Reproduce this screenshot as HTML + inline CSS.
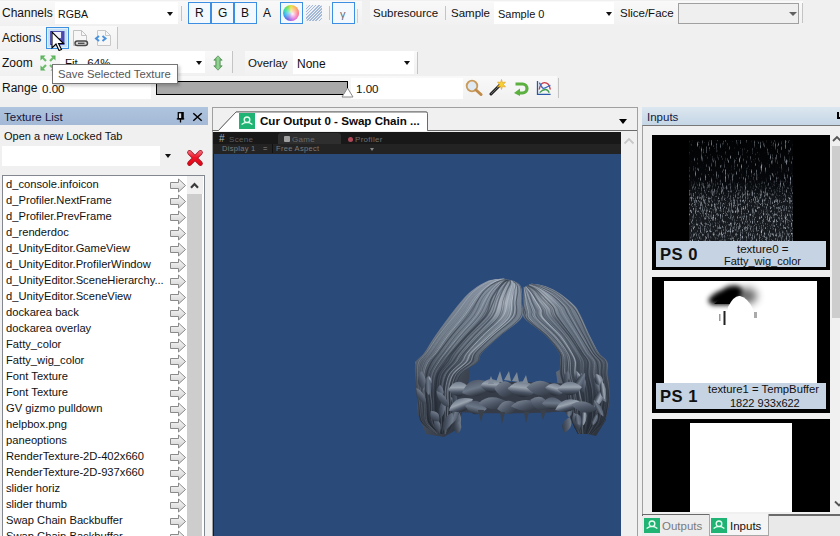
<!DOCTYPE html>
<html><head><meta charset="utf-8">
<style>
*{box-sizing:border-box;margin:0;padding:0}
html,body{width:840px;height:536px;overflow:hidden;background:#f0f0f0;font-family:"Liberation Sans",sans-serif;font-size:11.5px;color:#111}
.a{position:absolute}
.t{position:absolute;white-space:nowrap;line-height:14px}
.tb{position:absolute;background:linear-gradient(#f9f9f9,#f1f1f1)}
.sep{position:absolute;width:1px;background:#c4c4c4}
.combo{position:absolute;background:#fff}
.arr{position:absolute;width:0;height:0;border-left:3.5px solid transparent;border-right:3.5px solid transparent;border-top:4px solid #111}
.btn{position:absolute;border:1px solid #3c8ee2;background:#f4f9fd}
.row{position:absolute;left:6px;height:16px;line-height:16px;font-size:11.2px;white-space:nowrap}
.ra{position:absolute;left:170px}
</style></head><body>

<!-- ===== Row 1 ===== -->
<div class="tb" style="left:0;top:1px;width:362px;height:24px"></div>
<div class="tb" style="left:370px;top:1px;width:433px;height:24px"></div>
<div class="t" style="left:2px;top:6px;font-size:12px">Channels</div>
<div class="combo" style="left:55px;top:2px;width:123px;height:22px"></div>
<div class="t" style="left:58px;top:7px;font-size:10.6px">RGBA</div>
<div class="arr" style="left:167px;top:12px"></div>
<div class="sep" style="left:181px;top:6px;height:15px"></div>
<div class="btn" style="left:188px;top:2px;width:23px;height:22px"></div>
<div class="btn" style="left:211px;top:2px;width:23px;height:22px"></div>
<div class="btn" style="left:234px;top:2px;width:23px;height:22px"></div>
<div class="t" style="left:195px;top:6px;font-size:12px">R</div>
<div class="t" style="left:218px;top:6px;font-size:12px">G</div>
<div class="t" style="left:241px;top:6px;font-size:12px">B</div>
<div class="t" style="left:263px;top:6px;font-size:12px">A</div>
<div class="btn" style="left:280px;top:2px;width:23px;height:22px"></div>
<div class="a" style="left:283px;top:5px;width:16px;height:16px;border-radius:50%;background:conic-gradient(#e8e040,#ff9a40 45deg,#ff4060 95deg,#e040d0 150deg,#6050e0 205deg,#30b0f0 255deg,#40e0a0 300deg,#90e040 335deg,#e8e040)"><div class="a" style="left:0;top:0;width:16px;height:16px;border-radius:50%;background:radial-gradient(circle at 60% 55%,rgba(255,255,255,.95) 0,rgba(255,255,255,.55) 25%,rgba(255,255,255,0) 65%)"></div></div>
<div class="a" style="left:306px;top:5px;width:16px;height:16px;border-radius:2px;background:repeating-linear-gradient(135deg,#a3b9d6 0 1.1px,#eef2f8 1.1px 2.2px)"></div>
<div class="sep" style="left:329px;top:6px;height:14px"></div>
<div class="btn" style="left:332px;top:2px;width:23px;height:22px"></div>
<div class="t" style="left:340px;top:7px;font-size:11px;color:#666e7a">&#947;</div>
<div class="sep" style="left:357px;top:9px;height:14px;background:#cfcfcf"></div>
<div class="t" style="left:373px;top:6px">Subresource</div>
<div class="sep" style="left:445px;top:6px;height:14px"></div>
<div class="t" style="left:451px;top:6px">Sample</div>
<div class="combo" style="left:494px;top:2px;width:120px;height:22px"></div>
<div class="t" style="left:498px;top:7px;font-size:11px">Sample 0</div>
<div class="arr" style="left:606px;top:12px"></div>
<div class="t" style="left:620px;top:6px">Slice/Face</div>
<div class="a" style="left:678px;top:3px;width:121px;height:21px;border:1px solid #a0a0a0;background:#efefef"></div>
<div class="arr" style="left:789px;top:12px;border-top-color:#606060;border-left-width:4px;border-right-width:4px;border-top-width:4.5px"></div>
<div class="sep" style="left:802px;top:3px;height:20px"></div>

<!-- ===== Row 2 ===== -->
<div class="tb" style="left:0;top:26px;width:117px;height:24px"></div>
<div class="t" style="left:2px;top:31px;font-size:12px">Actions</div>
<div class="sep" style="left:117px;top:27px;height:22px"></div>
<div class="a" style="left:46px;top:27px;width:23px;height:22px;border:1px solid #3d8fe0;background:#cfe4f8"></div>
<div class="a" style="left:47px;top:28px;width:21px;height:20px;border:1.5px solid #e2f0fb;background:#c6e0f6"></div>
<svg class="a" style="left:49px;top:30px" width="17" height="16">
<defs><linearGradient id="fl" x1="0" y1="0" x2="1" y2="0"><stop offset="0" stop-color="#b8b8ee"/><stop offset=".5" stop-color="#8080d8"/><stop offset="1" stop-color="#3a3aa6"/></linearGradient></defs>
<rect x="1.5" y="1.5" width="13.5" height="13" fill="url(#fl)" stroke="#5050b0" stroke-width="1"/>
<rect x="4" y="2" width="8" height="6" fill="#f0f0fc"/>
</svg>
<svg class="a" style="left:51px;top:31px" width="15" height="22">
<path d="M1 1 L1 17 L5 13 L8 19.5 L10.5 18.5 L7.5 12.5 L12.5 12.5 Z" fill="#fff" stroke="#000" stroke-width="1.1" stroke-linejoin="miter"/>
</svg>
<svg class="a" style="left:72px;top:29px" width="18" height="19">
<path d="M1.5 1.5 H9.5 L14.5 6.5 V16.5 H1.5 Z" fill="#f7f7f7" stroke="#c2c2c2" stroke-width="1"/>
<path d="M9.5 1.5 V6.5 H14.5" fill="none" stroke="#c2c2c2"/>
<rect x="3" y="12" width="12.5" height="4.6" rx="2.3" fill="#d8d8d8" stroke="#4a4a4a" stroke-width="1.5"/>
<line x1="6" y1="14.3" x2="12.5" y2="14.3" stroke="#4a4a4a" stroke-width="1.3"/>
</svg>
<svg class="a" style="left:94px;top:29px" width="18" height="19">
<path d="M3.5 1.5 H11.5 L16.5 6.5 V16.5 H3.5 Z" fill="#f7f7f7" stroke="#c8c8c8" stroke-width="1"/>
<path d="M11.5 1.5 V6.5 H16.5" fill="none" stroke="#c8c8c8"/>
<path d="M5 7 L2 9.5 L5 12 M8.5 7 L11.5 9.5 L8.5 12" fill="none" stroke="#4a92dc" stroke-width="2"/>
</svg>


<!-- ===== Row 3 ===== -->
<div class="tb" style="left:0;top:51px;width:232px;height:24px"></div>
<div class="tb" style="left:245px;top:51px;width:172px;height:24px"></div>
<div class="t" style="left:2px;top:56px;font-size:12px">Zoom</div>
<div class="combo" style="left:60px;top:51px;width:145px;height:22px"></div>
<div class="t" style="left:65px;top:56px">Fit&nbsp;&nbsp; 64%</div>
<div class="arr" style="left:196px;top:61px"></div>
<div class="sep" style="left:232px;top:51px;height:22px"></div>
<svg class="a" style="left:39px;top:54px" width="18" height="18">
<g fill="#58b05a">
<path d="M1.5 1.5 H6.5 L1.5 6.5Z"/><path d="M16.5 1.5 H11.5 L16.5 6.5Z"/><path d="M1.5 16.5 H6.5 L1.5 11.5Z"/><path d="M16.5 16.5 H11.5 L16.5 11.5Z"/>
</g>
<g stroke="#6cbc6c" stroke-width="2.2">
<path d="M3 3 L7 7"/><path d="M15 3 L11 7"/><path d="M3 15 L7 11"/><path d="M15 15 L11 11"/>
</g>
</svg>
<svg class="a" style="left:210px;top:55px" width="16" height="16">
<defs><linearGradient id="ga" x1="0" y1="0" x2="1" y2="0"><stop offset="0" stop-color="#4a9a4e"/><stop offset=".5" stop-color="#9ad89a"/><stop offset="1" stop-color="#4a9a4e"/></linearGradient></defs>
<path d="M8 0.8 L12.2 5.2 H10.2 V10.8 H12.2 L8 15.2 L3.8 10.8 H5.8 V5.2 H3.8 Z" fill="url(#ga)" stroke="#4f8a52" stroke-width="0.7" stroke-linejoin="round"/>
</svg>

<div class="t" style="left:248px;top:56px">Overlay</div>
<div class="combo" style="left:293px;top:51px;width:121px;height:23px"></div>
<div class="t" style="left:297px;top:57px;font-size:12px">None</div>
<div class="arr" style="left:404px;top:61px"></div>
<div class="sep" style="left:417px;top:52px;height:22px"></div>

<!-- ===== Row 4 ===== -->
<div class="tb" style="left:0;top:76px;width:557px;height:24px"></div>
<div class="t" style="left:2px;top:81px;font-size:12px">Range</div>
<div class="combo" style="left:40px;top:80px;width:111px;height:19px"></div>
<div class="t" style="left:42px;top:82px;font-size:11.6px">0.00</div>
<div class="a" style="left:156px;top:81px;width:192px;height:14px;border:1.5px solid #000;background:#a9a9a9"></div>
<div class="combo" style="left:351px;top:78px;width:112px;height:21px"></div>
<div class="t" style="left:356px;top:82px;font-size:11.6px">1.00</div>
<div class="sep" style="left:558px;top:78px;height:20px"></div>
<div class="a" style="left:156px;top:81px;width:3px;height:3px;border-left:2px solid transparent;border-right:2px solid transparent;border-top:3px solid #000"></div>
<svg class="a" style="left:341px;top:87px" width="13" height="11"><path d="M6.5 1 L12 10 H1 Z" fill="#fff" stroke="#888" stroke-width="1"/></svg>
<svg class="a" style="left:465px;top:79px" width="18" height="17">
<circle cx="7" cy="7" r="5.3" fill="#dfe9f3" stroke="#c99a5a" stroke-width="1.8"/>
<path d="M11 11 L16 15.5" stroke="#c08a48" stroke-width="3" stroke-linecap="round"/>
</svg>
<svg class="a" style="left:489px;top:79px" width="18" height="17">
<path d="M2 15 L11 6" stroke="#222" stroke-width="3" stroke-linecap="round"/>
<path d="M2 15 L11 6" stroke="#666" stroke-width="1"/>
<path d="M12.5 0.5 L13.5 3.5 L16.5 3 L14.5 5.5 L16.5 8 L13.5 7.5 L12.5 10.5 L11.5 7.5 L8.5 8 L10.5 5.5 L8.5 3 L11.5 3.5Z" fill="#f5d030" stroke="#e0a020" stroke-width=".6"/>
</svg>
<svg class="a" style="left:513px;top:81px" width="16" height="15">
<path d="M2.5 3 H9.5 A4.5 4.5 0 0 1 9.5 12 H6" fill="none" stroke="#5cb040" stroke-width="3.2"/>
<path d="M1 12 L7 7.5 V15Z" fill="#5cb040"/>
</svg>
<svg class="a" style="left:536px;top:80px" width="17" height="16">
<path d="M3.2 9.5 C4 4.5 6 2.6 8.5 2.6 C11 2.6 13.5 4.5 14.3 9.5" fill="none" stroke="#c83a48" stroke-width="1.4"/>
<path d="M3.6 12.6 C6 10.2 8 9.5 9.5 9.5 C11 9.5 12.5 11 13.2 12.8" fill="none" stroke="#3e9e4a" stroke-width="1.3"/>
<path d="M3.4 2.6 C5 6 6 8.3 7.5 8.3 C10 8.3 12 6 14.4 5.4" fill="none" stroke="#3a68c0" stroke-width="1.3"/>
<path d="M1.5 1 V14.4 H14.6" fill="none" stroke="#2a58a8" stroke-width="1.3"/>
</svg>



<!-- ===== Texture List panel ===== -->
<div class="a" style="left:0;top:107px;width:208px;height:18px;background:linear-gradient(#afc4de,#a3b9d6)"></div>
<div class="t" style="left:4px;top:110px;color:#14163a">Texture List</div>
<div class="combo" style="left:2px;top:146px;width:158px;height:20px"></div>
<div class="a" style="left:160px;top:146px;width:16px;height:20px;background:#f0f0f0"></div>
<div class="arr" style="left:165px;top:154px"></div>
<div class="t" style="left:4px;top:129px;font-size:11px">Open a new Locked Tab</div>
<svg class="a" style="left:176px;top:111px" width="10" height="12"><rect x="2.3" y="1.7" width="4.5" height="6" fill="#d4dbe4" stroke="#000" stroke-width="1.3"/><rect x="5.2" y="1" width="2.4" height="7" fill="#000"/><path d="M0.8 7.9 H8.2 M4.5 8 V11.5" stroke="#000" stroke-width="1.3"/></svg>
<svg class="a" style="left:192px;top:112px" width="11" height="10"><path d="M1.3 1.3 L9.7 8.7 M9.7 1.3 L1.3 8.7" stroke="#000" stroke-width="1.5"/></svg>
<svg class="a" style="left:186px;top:149px" width="18" height="18">
<defs><linearGradient id="rx" x1="0" y1="0" x2="0" y2="18" gradientUnits="userSpaceOnUse"><stop offset="0" stop-color="#f28a98"/><stop offset=".45" stop-color="#f01828"/><stop offset="1" stop-color="#d80010"/></linearGradient></defs>
<path d="M3.5 3.5 L14.5 14.5 M14.5 3.5 L3.5 14.5" stroke="#a01020" stroke-width="4.6" stroke-linecap="round"/>
<path d="M3.5 3.5 L14.5 14.5 M14.5 3.5 L3.5 14.5" stroke="url(#rx)" stroke-width="3.2" stroke-linecap="round"/>
</svg>

<div class="a" style="left:2px;top:175px;width:203px;height:370px;border:1px solid #828790;background:#fff"></div>
<div class="a" style="left:187px;top:176px;width:16px;height:18px;background:#f0f0f0"></div>
<div class="a" style="left:187px;top:194px;width:15px;height:350px;background:#cdcdcd"></div>
<svg width="0" height="0" style="position:absolute"><defs>
<linearGradient id="ag" x1="0" y1="0" x2="0" y2="1"><stop offset="0" stop-color="#fafafa"/><stop offset="1" stop-color="#cfcfcf"/></linearGradient>
<g id="ar"><path d="M1.5 4.5 H9.5 V1 L16.5 7.5 L9.5 14 V10.5 H1.5 Z" fill="url(#ag)" stroke="#8a8a8a" stroke-width="1" stroke-linejoin="miter"/></g>
</defs></svg>
<!-- list rows -->
<div class="row" style="top:176px">d_console.infoicon</div>
<svg class="a" style="left:169px;top:178px" width="18" height="15"><use href="#ar"/></svg>
<div class="row" style="top:192px">d_Profiler.NextFrame</div>
<svg class="a" style="left:169px;top:194px" width="18" height="15"><use href="#ar"/></svg>
<div class="row" style="top:208px">d_Profiler.PrevFrame</div>
<svg class="a" style="left:169px;top:210px" width="18" height="15"><use href="#ar"/></svg>
<div class="row" style="top:224px">d_renderdoc</div>
<svg class="a" style="left:169px;top:226px" width="18" height="15"><use href="#ar"/></svg>
<div class="row" style="top:240px">d_UnityEditor.GameView</div>
<svg class="a" style="left:169px;top:242px" width="18" height="15"><use href="#ar"/></svg>
<div class="row" style="top:256px">d_UnityEditor.ProfilerWindow</div>
<svg class="a" style="left:169px;top:258px" width="18" height="15"><use href="#ar"/></svg>
<div class="row" style="top:272px">d_UnityEditor.SceneHierarchy...</div>
<svg class="a" style="left:169px;top:274px" width="18" height="15"><use href="#ar"/></svg>
<div class="row" style="top:288px">d_UnityEditor.SceneView</div>
<svg class="a" style="left:169px;top:290px" width="18" height="15"><use href="#ar"/></svg>
<div class="row" style="top:304px">dockarea back</div>
<svg class="a" style="left:169px;top:306px" width="18" height="15"><use href="#ar"/></svg>
<div class="row" style="top:320px">dockarea overlay</div>
<svg class="a" style="left:169px;top:322px" width="18" height="15"><use href="#ar"/></svg>
<div class="row" style="top:336px">Fatty_color</div>
<svg class="a" style="left:169px;top:338px" width="18" height="15"><use href="#ar"/></svg>
<div class="row" style="top:352px">Fatty_wig_color</div>
<svg class="a" style="left:169px;top:354px" width="18" height="15"><use href="#ar"/></svg>
<div class="row" style="top:368px">Font Texture</div>
<svg class="a" style="left:169px;top:370px" width="18" height="15"><use href="#ar"/></svg>
<div class="row" style="top:384px">Font Texture</div>
<svg class="a" style="left:169px;top:386px" width="18" height="15"><use href="#ar"/></svg>
<div class="row" style="top:400px">GV gizmo pulldown</div>
<svg class="a" style="left:169px;top:402px" width="18" height="15"><use href="#ar"/></svg>
<div class="row" style="top:416px">helpbox.png</div>
<svg class="a" style="left:169px;top:418px" width="18" height="15"><use href="#ar"/></svg>
<div class="row" style="top:432px">paneoptions</div>
<svg class="a" style="left:169px;top:434px" width="18" height="15"><use href="#ar"/></svg>
<div class="row" style="top:448px">RenderTexture-2D-402x660</div>
<svg class="a" style="left:169px;top:450px" width="18" height="15"><use href="#ar"/></svg>
<div class="row" style="top:464px">RenderTexture-2D-937x660</div>
<svg class="a" style="left:169px;top:466px" width="18" height="15"><use href="#ar"/></svg>
<div class="row" style="top:480px">slider horiz</div>
<svg class="a" style="left:169px;top:482px" width="18" height="15"><use href="#ar"/></svg>
<div class="row" style="top:496px">slider thumb</div>
<svg class="a" style="left:169px;top:498px" width="18" height="15"><use href="#ar"/></svg>
<div class="row" style="top:512px">Swap Chain Backbuffer</div>
<svg class="a" style="left:169px;top:514px" width="18" height="15"><use href="#ar"/></svg>
<div class="row" style="top:528px">Swap Chain Backbuffer</div>
<svg class="a" style="left:169px;top:530px" width="18" height="15"><use href="#ar"/></svg>


<svg class="a" style="left:188px;top:180px" width="12" height="10"><path d="M3 7.8 L6.5 4 L10 7.8" fill="none" stroke="#3a3a3a" stroke-width="2.2"/></svg>
<!-- ===== Center panel ===== -->
<div class="a" style="left:212px;top:107px;width:426px;height:440px;border:1px solid #a0a0a0;background:#f0f0f0"></div>
<div class="a" style="left:213px;top:132px;width:408px;height:12px;background:#181818"></div>
<div class="a" style="left:213px;top:144px;width:408px;height:10px;background:#232323"></div>
<div class="a" style="left:213px;top:154px;width:408px;height:382px;background:#2a4a7a;border-left:1px solid #1a1a1a"></div>

<!-- tab -->
<svg class="a" style="left:212px;top:107px" width="426" height="26">
<path d="M0.5 23.5 H6.5 L24 5 H214 Q215.5 5 215.5 6.5 V23.5 H425" fill="none" stroke="#7a7a7a" stroke-width="1"/>
<path d="M6.5 23.5 L24 5 H214 Q215.5 5 215.5 6.5 V24 H6.5Z" fill="#fff"/>
<path d="M0.5 23.5 H6.5 L24 5 H214 Q215.5 5 215.5 6.5 V23.5 H425" fill="none" stroke="#6a6a6a" stroke-width="1"/>
</svg>
<div class="a" style="left:239px;top:113px;width:16px;height:16px;background:#1fb473"></div>
<svg class="a" style="left:239px;top:113px" width="16" height="16"><circle cx="8" cy="6.8" r="2.8" fill="none" stroke="#e8fff2" stroke-width="1.4"/><path d="M2.6 11.6 Q8 7.2 13.4 11.6" fill="none" stroke="#e8fff2" stroke-width="1.3"/></svg>
<div class="t" style="left:260px;top:114px;font-weight:bold;font-size:11.6px;color:#0a0a0a">Cur Output 0 - Swap Chain ...</div>
<div class="a" style="left:619px;top:119px;width:0;height:0;border-left:4px solid transparent;border-right:4px solid transparent;border-top:5px solid #000"></div>
<svg class="a" style="left:623px;top:136px" width="12" height="10"><path d="M1.5 7.5 L6 3 L10.5 7.5" fill="none" stroke="#c8c8c8" stroke-width="1.8"/></svg>


<!-- hair -->
<svg class="a" style="left:0;top:0" width="840" height="536">
<defs>
<linearGradient id="dk" x1="0" y1="0" x2="0" y2="1"><stop offset="0" stop-color="#1e242d" stop-opacity="0"/><stop offset=".45" stop-color="#1e242d" stop-opacity="0"/><stop offset="1" stop-color="#1e242d" stop-opacity=".55"/></linearGradient>
<linearGradient id="hl" x1="0" y1="0" x2="0" y2="1"><stop offset="0" stop-color="#8893a2"/><stop offset=".4" stop-color="#67727f"/><stop offset=".72" stop-color="#404856"/><stop offset="1" stop-color="#2c333d"/></linearGradient>
<linearGradient id="hr" x1="0" y1="0" x2="0" y2="1"><stop offset="0" stop-color="#7f8a99"/><stop offset=".4" stop-color="#606b79"/><stop offset=".72" stop-color="#3e4654"/><stop offset="1" stop-color="#2c333d"/></linearGradient>
<radialGradient id="hg"><stop offset="0" stop-color="#e6ecf2" stop-opacity=".5"/><stop offset="1" stop-color="#dfe6ee" stop-opacity="0"/></radialGradient>
<linearGradient id="cy" x1="0" y1="0" x2="0" y2="1"><stop offset="0" stop-color="#5a6473"/><stop offset=".35" stop-color="#a6b0bd"/><stop offset=".6" stop-color="#5d6776"/><stop offset="1" stop-color="#2c333d"/></linearGradient>
<linearGradient id="lf1" x1="0" y1="0" x2="0" y2="1"><stop offset="0" stop-color="#6f7a8a"/><stop offset=".4" stop-color="#9aa4b0"/><stop offset=".7" stop-color="#4a5464"/><stop offset="1" stop-color="#262c35"/></linearGradient>
<linearGradient id="lf2" x1="0" y1="0" x2="1" y2="1"><stop offset="0" stop-color="#8893a1"/><stop offset=".5" stop-color="#4e5868"/><stop offset="1" stop-color="#262c35"/></linearGradient>
<linearGradient id="lf3" x1="0" y1="0" x2="0" y2="1"><stop offset="0" stop-color="#505a6a"/><stop offset=".5" stop-color="#6c7787"/><stop offset="1" stop-color="#2a313b"/></linearGradient>
<linearGradient id="cl" x1="0" y1="0" x2="1" y2="1"><stop offset="0" stop-color="#6a7482"/><stop offset=".5" stop-color="#444c59"/><stop offset="1" stop-color="#262c35"/></linearGradient>
<clipPath id="Lc"><path d="M503.0 278.4 C500.6 278.8 493.4 278.8 488.6 280.6 C483.8 282.4 478.1 286.1 474.0 289.0 C469.9 291.9 467.8 293.8 464.0 298.0 C460.2 302.2 455.8 307.7 451.0 314.0 C446.2 320.3 439.5 329.5 435.0 336.0 C430.5 342.5 427.2 348.7 424.0 353.0 C420.8 357.3 417.5 358.5 416.0 362.0 C414.5 365.5 415.0 369.3 415.0 374.0 C415.0 378.7 415.5 384.8 416.0 390.0 C416.5 395.2 417.2 399.7 418.0 405.0 C418.8 410.3 417.8 417.2 421.0 422.0 C424.2 426.8 434.3 432.0 437.0 434.0 L447.0 434.0 C448.0 432.0 451.7 426.8 453.0 422.0 C454.3 417.2 454.5 410.3 455.0 405.0 C455.5 399.7 454.8 395.2 456.0 390.0 C457.2 384.8 458.3 378.7 462.0 374.0 C465.7 369.3 474.7 365.5 478.0 362.0 C481.3 358.5 478.3 357.3 482.0 353.0 C485.7 348.7 493.4 341.8 500.0 336.0 C506.6 330.2 517.8 323.7 521.5 318.0 C525.2 312.3 521.9 306.3 522.0 302.0 C522.1 297.7 522.3 294.8 522.0 292.0 C521.7 289.2 521.3 286.8 520.0 285.0 C518.7 283.2 515.0 281.7 514.0 281.0 Z"/></clipPath>
<clipPath id="Rc"><path d="M531.4 283.4 C533.8 283.9 540.9 284.6 545.7 286.3 C550.5 288.0 555.3 290.3 560.0 293.4 C564.7 296.5 570.7 301.6 574.0 305.0 C577.3 308.4 577.3 308.8 580.0 314.0 C582.7 319.2 586.8 329.5 590.0 336.0 C593.2 342.5 596.1 348.7 599.0 353.0 C601.9 357.3 606.0 358.5 607.5 362.0 C609.0 365.5 607.6 369.3 608.0 374.0 C608.4 378.7 609.8 384.8 610.0 390.0 C610.2 395.2 610.0 399.7 609.0 405.0 C608.0 410.3 606.8 417.2 604.0 422.0 C601.2 426.8 594.0 432.0 592.0 434.0 L578.0 434.0 C577.0 432.0 573.7 426.8 572.0 422.0 C570.3 417.2 569.2 410.3 568.0 405.0 C566.8 399.7 566.3 395.2 565.0 390.0 C563.7 384.8 560.8 378.7 560.0 374.0 C559.2 369.3 560.2 365.5 560.0 362.0 C559.8 358.5 561.3 357.3 559.0 353.0 C556.7 348.7 551.7 341.7 546.0 336.0 C540.3 330.3 528.7 323.0 525.0 319.0 C521.3 315.0 524.3 314.3 524.0 312.0 C523.7 309.7 523.2 307.8 523.0 305.0 C522.8 302.2 523.0 297.9 523.0 295.0 C523.0 292.1 522.9 288.9 522.9 287.7 Z"/></clipPath>
</defs>
<path d="M415 362 L432 348 L470 370 L466 402 L456 430 L444 437 L426 434 L418 414 Z" fill="url(#cl)"/>
<path d="M608 362 L594 349 L556 372 L560 402 L578 432 L596 436 L606 420 Z" fill="url(#cl)"/>
<path d="M503.0 278.4 C500.6 278.8 493.4 278.8 488.6 280.6 C483.8 282.4 478.1 286.1 474.0 289.0 C469.9 291.9 467.8 293.8 464.0 298.0 C460.2 302.2 455.8 307.7 451.0 314.0 C446.2 320.3 439.5 329.5 435.0 336.0 C430.5 342.5 427.2 348.7 424.0 353.0 C420.8 357.3 417.5 358.5 416.0 362.0 C414.5 365.5 415.0 369.3 415.0 374.0 C415.0 378.7 415.5 384.8 416.0 390.0 C416.5 395.2 417.2 399.7 418.0 405.0 C418.8 410.3 417.8 417.2 421.0 422.0 C424.2 426.8 434.3 432.0 437.0 434.0 L447.0 434.0 C448.0 432.0 451.7 426.8 453.0 422.0 C454.3 417.2 454.5 410.3 455.0 405.0 C455.5 399.7 454.8 395.2 456.0 390.0 C457.2 384.8 458.3 378.7 462.0 374.0 C465.7 369.3 474.7 365.5 478.0 362.0 C481.3 358.5 478.3 357.3 482.0 353.0 C485.7 348.7 493.4 341.8 500.0 336.0 C506.6 330.2 517.8 323.7 521.5 318.0 C525.2 312.3 521.9 306.3 522.0 302.0 C522.1 297.7 522.3 294.8 522.0 292.0 C521.7 289.2 521.3 286.8 520.0 285.0 C518.7 283.2 515.0 281.7 514.0 281.0 Z" fill="url(#hl)"/>
<g clip-path="url(#Lc)" fill="none">
<ellipse cx="503" cy="303" rx="12" ry="24" transform="rotate(25 503 303)" fill="url(#hg)"/>
<path d="M503.5 278.8 C501.2 279.2 494.4 279.3 489.7 281.0 C485.0 282.6 479.4 285.5 475.3 288.5 C471.2 291.4 468.8 294.3 464.9 298.6 C461.1 302.9 457.3 308.3 452.4 314.5 C447.5 320.8 440.2 329.5 435.6 336.0 C431.0 342.4 427.8 348.8 424.7 353.1 C421.6 357.3 418.7 358.0 417.1 361.4 C415.6 364.9 415.4 368.9 415.5 373.7 C415.5 378.6 416.7 385.0 417.2 390.3 C417.6 395.6 417.6 400.1 418.2 405.4 C418.9 410.7 418.0 417.5 421.1 422.1 C424.2 426.8 434.1 431.5 436.7 433.4" stroke="#95a0ae" stroke-width="0.61" opacity="0.25"/>
<path d="M504.0 278.3 C501.8 278.7 495.4 279.1 490.8 280.9 C486.3 282.6 480.6 285.9 476.8 288.8 C472.9 291.7 471.2 294.1 467.6 298.4 C464.0 302.8 460.2 308.5 455.3 314.7 C450.4 320.9 443.0 329.5 438.2 335.8 C433.4 342.1 429.9 348.3 426.7 352.6 C423.4 356.9 420.3 358.3 418.8 361.8 C417.3 365.2 417.7 368.7 417.6 373.4 C417.6 378.1 418.0 384.5 418.3 389.8 C418.7 395.1 419.0 400.1 419.7 405.4 C420.5 410.7 419.7 417.0 422.7 421.8 C425.6 426.6 435.0 432.2 437.5 434.2" stroke="#c8d2de" stroke-width="0.52" opacity="0.59"/>
<path d="M504.2 278.0 C502.1 278.5 495.7 279.0 491.3 280.8 C486.9 282.5 481.6 285.8 477.7 288.6 C473.8 291.5 471.3 293.7 467.8 297.9 C464.4 302.1 461.5 307.5 456.9 313.9 C452.3 320.4 444.9 330.0 440.2 336.5 C435.6 343.0 432.2 348.6 428.9 352.8 C425.6 357.1 422.2 358.6 420.5 362.0 C418.8 365.5 419.1 368.8 418.9 373.5 C418.7 378.3 418.9 385.2 419.3 390.4 C419.7 395.5 420.5 399.3 421.2 404.4 C422.0 409.6 421.2 416.6 423.9 421.5 C426.7 426.5 435.3 432.0 437.6 434.1" stroke="#95a0ae" stroke-width="0.96" opacity="0.28"/>
<path d="M503.9 278.4 C501.8 278.8 495.6 278.7 491.3 280.5 C487.0 282.4 481.8 286.6 478.3 289.5 C474.8 292.4 473.8 293.7 470.3 298.0 C466.8 302.2 462.2 308.7 457.4 315.0 C452.6 321.3 446.1 329.5 441.4 335.9 C436.8 342.2 432.5 348.8 429.4 353.1 C426.2 357.5 424.1 358.6 422.5 361.9 C420.8 365.3 419.9 368.9 419.5 373.5 C419.2 378.0 420.1 384.1 420.4 389.4 C420.8 394.8 421.1 399.9 421.6 405.4 C422.2 410.9 420.9 417.5 423.7 422.3 C426.5 427.1 436.1 432.2 438.5 434.2" stroke="#95a0ae" stroke-width="0.72" opacity="0.23"/>
<path d="M504.7 278.5 C502.6 279.0 496.3 279.8 492.2 281.7 C488.1 283.6 483.6 287.1 480.0 289.9 C476.4 292.7 474.1 294.4 470.7 298.5 C467.3 302.5 464.2 308.2 459.5 314.4 C454.8 320.7 447.2 329.5 442.3 335.9 C437.5 342.3 433.4 348.4 430.3 352.9 C427.3 357.3 425.4 359.0 423.8 362.6 C422.2 366.1 421.2 369.5 420.6 374.0 C420.1 378.5 420.2 384.3 420.5 389.5 C420.7 394.7 421.3 400.0 422.0 405.3 C422.8 410.7 422.4 417.0 425.2 421.8 C427.9 426.7 436.3 432.2 438.5 434.3" stroke="#95a0ae" stroke-width="0.88" opacity="0.37"/>
<path d="M504.9 278.5 C503.0 279.0 497.2 279.8 493.3 281.6 C489.4 283.4 484.8 286.3 481.4 289.2 C478.1 292.1 476.5 294.6 473.2 298.8 C469.9 302.9 466.4 307.9 461.6 314.0 C456.9 320.2 449.6 329.2 444.8 335.7 C440.0 342.2 436.1 348.5 432.9 353.0 C429.7 357.4 427.4 358.7 425.6 362.2 C423.9 365.7 423.0 369.1 422.4 373.8 C421.8 378.5 421.9 385.1 422.2 390.3 C422.4 395.5 423.3 399.5 423.9 404.8 C424.6 410.2 423.7 417.5 426.2 422.4 C428.7 427.4 436.6 432.6 438.7 434.6" stroke="#95a0ae" stroke-width="0.76" opacity="0.33"/>
<path d="M505.3 279.4 C503.4 279.7 497.8 279.9 494.0 281.6 C490.2 283.3 485.9 286.9 482.5 289.8 C479.1 292.7 476.8 294.8 473.6 299.0 C470.4 303.2 467.8 308.7 463.3 314.9 C458.7 321.1 450.9 329.8 446.1 336.1 C441.3 342.5 437.5 349.0 434.3 353.2 C431.1 357.4 428.9 358.0 427.0 361.4 C425.0 364.9 423.3 369.2 422.7 373.9 C422.1 378.6 422.8 384.5 423.1 389.7 C423.4 394.9 424.1 399.8 424.6 405.2 C425.1 410.5 423.7 417.2 426.0 422.0 C428.3 426.7 436.3 431.5 438.4 433.5" stroke="#c8d2de" stroke-width="0.63" opacity="0.36"/>
<path d="M504.7 278.9 C503.0 279.3 498.3 279.9 494.8 281.6 C491.3 283.4 486.9 286.5 483.8 289.3 C480.7 292.1 479.3 294.0 476.1 298.2 C473.0 302.4 469.8 308.3 465.1 314.5 C460.4 320.8 452.8 329.2 448.0 335.5 C443.1 341.9 439.4 348.4 436.1 352.8 C432.7 357.3 429.9 358.6 427.9 362.1 C425.9 365.7 424.6 369.4 424.0 374.1 C423.3 378.7 423.5 384.9 423.8 390.1 C424.2 395.3 425.4 400.0 426.0 405.4 C426.6 410.8 425.1 417.6 427.3 422.4 C429.5 427.1 437.2 431.9 439.2 433.8" stroke="#c8d2de" stroke-width="0.89" opacity="0.46"/>
<path d="M506.3 279.2 C504.6 279.7 499.7 280.5 496.2 282.2 C492.7 283.8 488.2 286.4 485.3 289.3 C482.3 292.1 481.3 294.8 478.4 299.1 C475.5 303.4 472.5 309.0 468.0 315.1 C463.5 321.3 456.5 329.6 451.5 335.9 C446.6 342.1 441.7 348.2 438.2 352.7 C434.8 357.1 433.0 358.9 431.1 362.6 C429.1 366.2 427.3 370.0 426.5 374.6 C425.7 379.1 426.3 384.9 426.4 390.1 C426.4 395.3 426.4 400.3 426.9 405.6 C427.3 410.9 426.8 417.1 428.9 421.9 C431.0 426.7 437.5 432.5 439.3 434.6" stroke="#222a35" stroke-width="1.03" opacity="0.34"/>
<path d="M505.9 279.0 C504.3 279.5 499.6 280.4 496.4 282.1 C493.1 283.8 489.5 286.4 486.6 289.2 C483.7 292.0 481.7 294.4 478.8 298.7 C476.0 303.1 474.1 309.2 469.5 315.4 C464.9 321.5 456.4 329.3 451.3 335.7 C446.1 342.1 441.6 349.2 438.4 353.6 C435.1 358.0 433.5 358.7 431.6 362.1 C429.6 365.6 427.8 369.5 426.9 374.2 C426.1 378.9 426.3 385.1 426.3 390.3 C426.3 395.5 426.5 400.0 427.0 405.3 C427.4 410.6 426.9 417.3 428.9 422.0 C431.0 426.8 437.6 431.8 439.4 433.8" stroke="#222a35" stroke-width="0.92" opacity="0.39"/>
<path d="M506.4 278.6 C504.9 279.2 500.6 279.9 497.6 281.9 C494.7 283.8 491.5 287.6 488.8 290.4 C486.1 293.2 484.1 294.5 481.3 298.6 C478.6 302.7 476.8 308.8 472.3 315.1 C467.8 321.4 459.6 329.9 454.4 336.2 C449.3 342.6 444.7 348.7 441.4 353.0 C438.2 357.2 437.0 358.3 434.9 361.9 C432.8 365.4 430.1 369.8 428.9 374.4 C427.6 379.1 427.4 384.7 427.5 389.8 C427.6 394.8 428.8 399.1 429.4 404.5 C430.0 409.9 429.2 417.4 430.9 422.2 C432.7 427.1 438.4 431.8 439.9 433.7" stroke="#95a0ae" stroke-width="0.57" opacity="0.43"/>
<path d="M506.6 279.2 C505.2 279.6 501.3 279.7 498.4 281.6 C495.6 283.4 492.2 287.4 489.4 290.3 C486.7 293.2 484.6 294.7 482.0 299.0 C479.4 303.2 478.2 309.5 473.9 315.6 C469.5 321.7 461.1 329.1 455.9 335.4 C450.7 341.8 446.0 349.1 442.8 353.6 C439.5 358.0 438.6 358.8 436.4 362.2 C434.2 365.7 430.8 369.8 429.4 374.4 C428.1 379.1 428.3 385.0 428.4 390.2 C428.6 395.3 430.0 400.0 430.3 405.3 C430.7 410.5 429.0 417.0 430.8 421.8 C432.5 426.5 439.0 431.6 440.7 433.6" stroke="#222a35" stroke-width="0.75" opacity="0.37"/>
<path d="M506.3 278.8 C505.2 279.3 502.1 279.7 499.5 281.6 C496.8 283.5 492.8 287.1 490.3 290.1 C487.8 293.2 487.1 295.7 484.6 299.9 C482.1 304.1 479.8 309.3 475.2 315.3 C470.7 321.4 462.7 329.8 457.5 336.1 C452.4 342.5 447.6 349.3 444.3 353.5 C441.0 357.8 439.7 358.1 437.6 361.5 C435.5 364.8 432.9 368.8 431.7 373.6 C430.5 378.3 430.2 384.8 430.2 390.0 C430.1 395.3 431.1 399.8 431.4 405.1 C431.8 410.4 430.8 416.9 432.4 421.7 C433.9 426.5 439.2 431.7 440.6 433.7" stroke="#95a0ae" stroke-width="0.57" opacity="0.33"/>
<path d="M506.9 279.6 C505.7 280.1 502.3 280.8 499.8 282.5 C497.3 284.1 494.2 286.9 491.9 289.6 C489.5 292.4 488.1 294.7 485.6 299.0 C483.0 303.3 481.0 309.3 476.5 315.6 C472.0 321.8 463.8 330.3 458.6 336.5 C453.5 342.7 448.6 348.6 445.4 352.8 C442.1 357.0 441.3 358.0 439.2 361.4 C437.1 364.9 434.1 368.6 432.6 373.5 C431.1 378.3 430.4 385.3 430.3 390.5 C430.2 395.7 431.5 399.3 431.9 404.7 C432.2 410.0 430.8 417.6 432.3 422.6 C433.8 427.5 439.5 432.4 440.9 434.4" stroke="#c8d2de" stroke-width="0.75" opacity="0.47"/>
<path d="M507.2 279.6 C506.1 280.0 503.3 280.4 500.9 282.2 C498.4 284.0 494.9 287.6 492.6 290.6 C490.3 293.5 489.5 295.7 487.2 300.0 C484.9 304.2 483.3 310.0 478.9 316.0 C474.5 322.0 466.1 329.9 460.8 336.1 C455.5 342.3 450.5 349.1 447.1 353.3 C443.7 357.5 442.8 358.1 440.5 361.5 C438.1 364.9 434.6 368.8 433.1 373.6 C431.5 378.5 431.4 385.2 431.3 390.5 C431.2 395.7 432.3 400.1 432.6 405.3 C432.9 410.6 431.6 417.2 433.1 422.0 C434.6 426.8 440.0 432.1 441.4 434.1" stroke="#222a35" stroke-width="0.69" opacity="0.39"/>
<path d="M507.2 279.3 C506.3 279.9 504.0 281.1 501.7 282.9 C499.5 284.7 496.1 287.2 493.9 290.0 C491.6 292.7 490.4 295.0 488.2 299.3 C486.0 303.5 484.8 309.3 480.5 315.4 C476.2 321.4 467.7 329.2 462.4 335.4 C457.2 341.7 452.3 348.4 449.0 352.8 C445.7 357.3 445.0 358.7 442.7 362.2 C440.4 365.7 436.6 369.4 435.1 374.0 C433.5 378.5 433.6 384.4 433.4 389.5 C433.2 394.7 433.6 399.3 433.8 404.7 C434.0 410.2 433.6 417.5 434.7 422.3 C435.9 427.1 439.8 431.7 440.8 433.6" stroke="#c8d2de" stroke-width="0.55" opacity="0.33"/>
<path d="M508.6 279.4 C507.6 279.9 504.9 280.7 502.7 282.6 C500.5 284.4 497.6 287.8 495.6 290.6 C493.6 293.5 492.8 295.2 490.7 299.4 C488.6 303.7 487.1 309.9 482.8 316.0 C478.6 322.2 470.6 329.9 465.2 336.2 C459.8 342.4 453.9 349.4 450.4 353.6 C446.8 357.8 445.9 358.1 443.7 361.5 C441.4 364.9 438.4 369.1 436.8 373.9 C435.1 378.7 433.9 384.9 433.7 390.1 C433.5 395.2 435.2 399.8 435.5 405.0 C435.7 410.3 434.5 416.6 435.4 421.5 C436.3 426.4 440.1 432.3 441.0 434.5" stroke="#222a35" stroke-width="0.65" opacity="0.53"/>
<path d="M507.7 279.5 C507.0 280.0 504.9 280.6 503.1 282.4 C501.3 284.2 498.9 287.4 496.9 290.2 C495.0 293.0 493.2 295.1 491.3 299.4 C489.4 303.6 489.6 309.4 485.4 315.5 C481.2 321.6 471.8 329.7 466.2 335.9 C460.6 342.0 455.3 348.2 451.9 352.5 C448.4 356.8 447.9 357.9 445.5 361.5 C443.2 365.2 439.3 369.7 437.6 374.5 C435.9 379.3 435.7 385.4 435.3 390.4 C435.0 395.4 435.2 399.2 435.4 404.4 C435.6 409.7 435.3 417.1 436.4 422.0 C437.5 426.9 441.0 431.9 441.9 433.9" stroke="#222a35" stroke-width="1.42" opacity="0.47"/>
<path d="M508.5 280.1 C507.8 280.5 506.0 280.7 504.3 282.4 C502.5 284.0 500.0 287.0 498.2 290.0 C496.5 293.0 495.8 296.2 493.9 300.4 C491.9 304.7 491.1 309.7 486.7 315.6 C482.3 321.5 473.2 329.5 467.6 335.7 C462.0 341.9 456.4 348.6 453.0 352.9 C449.7 357.2 450.1 358.1 447.7 361.7 C445.2 365.2 440.4 369.6 438.4 374.2 C436.4 378.9 436.1 384.5 435.8 389.6 C435.5 394.7 436.4 399.5 436.6 404.8 C436.8 410.2 435.9 417.0 436.8 421.9 C437.7 426.8 441.0 432.2 441.9 434.3" stroke="#222a35" stroke-width="1.19" opacity="0.52"/>
<path d="M509.1 279.8 C508.6 280.3 507.6 281.3 506.2 283.2 C504.8 285.1 502.5 288.1 500.8 290.9 C499.2 293.7 497.8 295.7 496.0 299.9 C494.2 304.1 494.3 310.1 490.0 316.1 C485.7 322.0 475.9 329.4 470.2 335.5 C464.4 341.6 458.7 348.3 455.4 352.7 C452.0 357.1 452.7 358.1 450.2 361.7 C447.7 365.3 442.3 369.7 440.2 374.3 C438.2 378.9 438.4 384.4 438.0 389.4 C437.6 394.5 437.7 399.1 437.7 404.6 C437.8 410.1 437.5 417.5 438.4 422.4 C439.2 427.4 442.2 432.2 443.0 434.1" stroke="#222a35" stroke-width="0.93" opacity="0.38"/>
<path d="M508.6 280.0 C508.3 280.5 508.1 281.6 506.7 283.4 C505.4 285.2 502.4 287.9 500.7 290.7 C498.9 293.6 498.0 296.2 496.4 300.5 C494.8 304.9 494.8 310.9 490.8 316.8 C486.7 322.6 477.8 329.4 472.1 335.5 C466.4 341.7 460.1 349.1 456.6 353.5 C453.1 357.9 453.5 358.5 451.0 361.9 C448.5 365.4 443.5 369.6 441.5 374.3 C439.5 379.0 439.5 384.9 439.1 390.0 C438.8 395.2 439.6 399.7 439.5 405.1 C439.4 410.5 438.1 417.7 438.6 422.4 C439.1 427.1 441.9 431.6 442.6 433.5" stroke="#95a0ae" stroke-width="0.79" opacity="0.21"/>
<path d="M510.0 279.8 C509.5 280.3 508.3 281.1 507.0 283.0 C505.7 284.8 503.7 287.9 502.3 290.9 C500.9 293.8 500.0 296.5 498.4 300.7 C496.9 304.9 496.9 310.2 492.8 316.2 C488.6 322.2 479.1 330.4 473.5 336.6 C467.9 342.8 462.4 349.2 459.0 353.4 C455.6 357.6 455.9 358.4 453.1 361.9 C450.4 365.4 444.8 369.8 442.6 374.4 C440.4 379.0 440.3 384.4 439.9 389.4 C439.4 394.5 439.6 399.0 439.7 404.5 C439.8 410.0 439.9 417.5 440.4 422.5 C440.8 427.5 442.2 432.4 442.6 434.4" stroke="#222a35" stroke-width="1.38" opacity="0.45"/>
<path d="M510.3 279.9 C509.8 280.5 508.7 281.6 507.7 283.4 C506.7 285.1 505.5 287.7 504.2 290.5 C503.0 293.3 501.9 296.0 500.3 300.3 C498.7 304.6 498.8 310.3 494.7 316.3 C490.6 322.2 481.3 329.9 475.7 336.0 C470.0 342.1 464.0 348.5 460.7 352.9 C457.3 357.3 458.1 358.8 455.5 362.4 C452.9 365.9 447.4 369.6 445.0 374.2 C442.7 378.8 441.9 384.9 441.3 390.0 C440.8 395.1 441.6 399.5 441.6 404.8 C441.6 410.2 440.9 417.4 441.2 422.2 C441.5 427.0 443.0 431.8 443.3 433.7" stroke="#c8d2de" stroke-width="0.75" opacity="0.28"/>
<path d="M510.5 280.4 C510.2 281.0 509.8 282.2 508.9 284.0 C508.0 285.8 506.4 288.4 505.2 291.2 C503.9 294.0 502.8 296.6 501.5 300.9 C500.2 305.2 501.3 311.3 497.4 317.2 C493.5 323.1 483.9 330.2 478.0 336.2 C472.2 342.2 465.9 349.0 462.4 353.3 C458.8 357.5 459.5 358.1 456.7 361.7 C454.0 365.2 448.3 369.7 445.8 374.5 C443.3 379.3 442.5 385.5 441.9 390.6 C441.3 395.6 442.4 399.7 442.3 404.9 C442.2 410.1 441.2 417.0 441.4 421.9 C441.5 426.8 442.9 432.1 443.2 434.2" stroke="#95a0ae" stroke-width="0.81" opacity="0.43"/>
<path d="M510.0 280.4 C510.0 281.0 510.5 282.0 509.9 283.8 C509.3 285.7 507.5 288.7 506.4 291.5 C505.2 294.3 504.3 296.3 503.0 300.5 C501.7 304.7 502.4 311.0 498.5 316.9 C494.6 322.7 485.4 329.5 479.5 335.6 C473.7 341.7 467.1 349.0 463.5 353.3 C459.8 357.6 460.5 358.0 457.7 361.5 C454.9 365.0 449.3 369.6 446.9 374.4 C444.6 379.2 444.2 385.2 443.6 390.3 C442.9 395.4 443.1 399.5 443.0 404.9 C442.8 410.3 442.6 417.7 442.7 422.5 C442.8 427.3 443.4 431.9 443.5 433.7" stroke="#222a35" stroke-width="0.77" opacity="0.54"/>
<path d="M510.2 280.3 C510.3 280.8 511.1 281.5 510.6 283.3 C510.1 285.1 508.1 288.2 507.1 291.2 C506.1 294.2 505.7 296.8 504.6 301.0 C503.5 305.2 504.5 310.4 500.4 316.3 C496.4 322.2 486.2 330.3 480.3 336.4 C474.4 342.5 468.4 348.5 465.0 352.8 C461.5 357.1 462.4 358.7 459.6 362.2 C456.9 365.7 450.9 369.0 448.3 373.7 C445.7 378.4 444.9 385.3 444.1 390.4 C443.4 395.5 444.0 399.3 443.8 404.5 C443.6 409.7 443.0 416.7 442.9 421.6 C442.9 426.4 443.4 431.6 443.5 433.6" stroke="#222a35" stroke-width="1.28" opacity="0.28"/>
<path d="M511.5 280.7 C511.6 281.3 512.4 282.6 512.1 284.4 C511.9 286.2 510.9 288.7 510.2 291.4 C509.4 294.1 508.8 296.3 507.6 300.5 C506.4 304.7 506.9 310.6 502.8 316.4 C498.7 322.3 488.8 329.7 482.9 335.8 C476.9 342.0 470.4 348.9 467.0 353.2 C463.5 357.5 465.2 358.0 462.3 361.5 C459.4 365.0 452.5 369.4 449.7 374.1 C447.0 378.7 446.2 384.4 445.5 389.5 C444.8 394.7 445.7 399.4 445.6 404.8 C445.5 410.3 445.1 417.0 445.0 422.0 C444.9 426.9 445.0 432.4 445.0 434.5" stroke="#c8d2de" stroke-width="1.00" opacity="0.52"/>
<path d="M510.9 280.3 C511.1 281.0 512.2 282.4 512.3 284.2 C512.3 286.0 511.7 288.3 510.9 291.1 C510.2 293.9 508.8 296.7 507.8 301.0 C506.7 305.4 508.6 311.6 504.7 317.4 C500.9 323.2 490.6 329.7 484.4 335.8 C478.3 341.8 471.4 349.1 467.8 353.4 C464.3 357.7 466.0 358.1 463.1 361.5 C460.2 364.8 453.3 369.0 450.6 373.7 C447.8 378.4 447.4 384.3 446.6 389.5 C445.8 394.6 446.0 399.0 445.8 404.5 C445.6 410.0 445.5 417.7 445.3 422.6 C445.1 427.5 444.7 432.0 444.6 433.9" stroke="#95a0ae" stroke-width="0.68" opacity="0.22"/>
<path d="M511.2 280.8 C511.6 281.3 513.4 281.8 513.5 283.5 C513.7 285.3 512.6 288.4 512.1 291.3 C511.5 294.3 511.1 297.0 510.2 301.2 C509.3 305.5 510.6 311.1 506.8 316.9 C503.0 322.6 493.6 330.0 487.5 335.9 C481.4 341.9 474.0 348.1 470.3 352.5 C466.6 356.9 468.2 359.0 465.3 362.5 C462.4 366.1 455.8 369.5 452.8 374.0 C449.8 378.6 448.2 384.7 447.4 389.9 C446.6 395.0 448.0 399.5 447.9 404.9 C447.8 410.4 447.1 417.6 446.7 422.5 C446.2 427.4 445.4 432.2 445.2 434.2" stroke="#c8d2de" stroke-width="1.04" opacity="0.26"/>
<path d="M512.4 280.9 C512.8 281.4 514.5 282.2 514.8 284.1 C515.0 285.9 514.3 289.0 513.8 291.8 C513.4 294.6 512.7 296.6 511.9 300.8 C511.1 305.1 512.8 311.2 509.0 317.2 C505.1 323.1 495.0 330.6 488.7 336.6 C482.4 342.5 474.8 348.7 471.1 352.9 C467.4 357.1 469.4 358.4 466.4 362.0 C463.4 365.5 456.2 369.6 453.2 374.2 C450.1 378.8 449.1 384.6 448.2 389.6 C447.4 394.7 448.4 399.0 448.2 404.5 C448.0 410.0 447.4 417.6 447.0 422.5 C446.6 427.3 445.9 431.8 445.6 433.6" stroke="#c8d2de" stroke-width="1.17" opacity="0.54"/>
<path d="M511.9 280.3 C512.6 281.1 515.4 283.1 515.8 284.9 C516.2 286.7 514.6 288.5 514.2 291.2 C513.8 293.9 513.7 296.8 513.2 301.1 C512.7 305.5 515.0 311.5 511.2 317.2 C507.4 323.0 496.9 329.5 490.6 335.6 C484.2 341.6 476.9 349.2 473.3 353.6 C469.7 357.9 472.1 358.1 468.9 361.5 C465.8 364.9 457.6 369.4 454.5 374.2 C451.3 378.9 450.7 384.7 449.8 389.8 C449.0 395.0 449.6 399.8 449.4 405.1 C449.2 410.4 449.4 416.9 448.7 421.7 C448.1 426.5 446.1 431.7 445.6 433.7" stroke="#222a35" stroke-width="0.72" opacity="0.47"/>
<path d="M512.9 280.1 C513.5 280.8 515.9 282.4 516.4 284.4 C516.9 286.3 516.2 289.0 516.0 291.8 C515.8 294.5 515.6 296.8 515.1 301.0 C514.5 305.2 516.6 311.1 512.7 316.9 C508.8 322.8 498.1 329.8 491.7 335.8 C485.3 341.8 477.7 348.4 474.1 352.8 C470.6 357.2 473.1 358.7 470.2 362.2 C467.2 365.7 459.8 369.2 456.6 373.8 C453.4 378.5 452.0 385.0 451.0 390.3 C450.1 395.5 451.1 400.3 450.9 405.5 C450.6 410.8 450.5 416.9 449.6 421.8 C448.6 426.6 446.0 432.4 445.3 434.5" stroke="#c8d2de" stroke-width="1.02" opacity="0.41"/>
<path d="M512.8 281.3 C513.5 281.8 515.9 283.0 516.7 284.6 C517.6 286.3 517.8 288.4 517.8 291.3 C517.7 294.1 516.7 297.3 516.2 301.6 C515.7 305.9 518.5 311.6 514.8 317.3 C511.0 322.9 500.1 329.5 493.7 335.5 C487.2 341.4 479.6 348.3 475.9 352.8 C472.2 357.3 474.7 359.1 471.6 362.6 C468.5 366.0 460.4 369.1 457.2 373.7 C454.0 378.4 453.5 385.0 452.5 390.3 C451.5 395.6 451.5 400.1 451.1 405.4 C450.7 410.7 450.9 417.1 450.1 421.9 C449.2 426.6 446.8 431.7 446.2 433.7" stroke="#222a35" stroke-width="0.99" opacity="0.51"/>
<path d="M513.0 280.4 C513.7 281.2 516.5 283.2 517.6 285.0 C518.6 286.8 519.1 288.4 519.2 291.2 C519.3 294.1 518.3 297.7 518.0 302.1 C517.7 306.6 521.0 312.5 517.3 318.2 C513.5 323.9 502.1 330.3 495.6 336.1 C489.0 341.9 481.6 348.9 478.1 353.3 C474.5 357.6 477.6 358.6 474.4 362.1 C471.2 365.7 462.4 370.0 458.9 374.5 C455.3 379.1 454.1 384.5 453.1 389.5 C452.2 394.5 453.4 399.1 453.0 404.5 C452.6 409.9 451.6 417.0 450.6 422.0 C449.5 426.9 447.2 432.4 446.6 434.5" stroke="#95a0ae" stroke-width="0.82" opacity="0.22"/>
<path d="M513.2 281.2 C514.1 281.8 517.6 282.8 518.7 284.6 C519.8 286.4 519.6 289.3 519.8 292.2 C520.0 295.2 520.2 298.1 520.1 302.3 C520.0 306.6 522.9 311.9 519.1 317.5 C515.3 323.0 503.9 329.9 497.5 335.7 C491.1 341.6 484.3 348.3 480.6 352.6 C476.9 357.0 478.9 358.3 475.4 361.8 C472.0 365.4 463.4 369.2 459.9 373.9 C456.5 378.6 455.9 385.1 454.8 390.2 C453.7 395.3 453.9 399.2 453.4 404.6 C452.9 409.9 453.0 417.3 451.9 422.2 C450.8 427.1 447.5 432.1 446.6 434.1" stroke="#95a0ae" stroke-width="0.63" opacity="0.24"/>
<path d="M513.9 281.4 C514.8 282.1 518.4 283.3 519.6 285.1 C520.8 286.9 520.9 289.5 521.2 292.3 C521.6 295.1 521.8 297.5 521.6 301.7 C521.4 305.9 523.8 311.9 520.0 317.7 C516.3 323.5 505.4 330.6 498.9 336.5 C492.4 342.4 484.5 348.8 480.9 353.2 C477.3 357.5 480.6 359.0 477.3 362.5 C474.0 366.1 464.6 369.8 460.9 374.3 C457.2 378.8 456.3 384.3 455.2 389.5 C454.2 394.7 455.1 400.1 454.6 405.4 C454.2 410.7 453.9 416.7 452.6 421.5 C451.4 426.2 448.3 431.8 447.4 433.9" stroke="#222a35" stroke-width="0.83" opacity="0.47"/>
<rect x="400" y="270" width="220" height="170" fill="url(#dk)"/>
</g>
<path d="M531.4 283.4 C533.8 283.9 540.9 284.6 545.7 286.3 C550.5 288.0 555.3 290.3 560.0 293.4 C564.7 296.5 570.7 301.6 574.0 305.0 C577.3 308.4 577.3 308.8 580.0 314.0 C582.7 319.2 586.8 329.5 590.0 336.0 C593.2 342.5 596.1 348.7 599.0 353.0 C601.9 357.3 606.0 358.5 607.5 362.0 C609.0 365.5 607.6 369.3 608.0 374.0 C608.4 378.7 609.8 384.8 610.0 390.0 C610.2 395.2 610.0 399.7 609.0 405.0 C608.0 410.3 606.8 417.2 604.0 422.0 C601.2 426.8 594.0 432.0 592.0 434.0 L578.0 434.0 C577.0 432.0 573.7 426.8 572.0 422.0 C570.3 417.2 569.2 410.3 568.0 405.0 C566.8 399.7 566.3 395.2 565.0 390.0 C563.7 384.8 560.8 378.7 560.0 374.0 C559.2 369.3 560.2 365.5 560.0 362.0 C559.8 358.5 561.3 357.3 559.0 353.0 C556.7 348.7 551.7 341.7 546.0 336.0 C540.3 330.3 528.7 323.0 525.0 319.0 C521.3 315.0 524.3 314.3 524.0 312.0 C523.7 309.7 523.2 307.8 523.0 305.0 C522.8 302.2 523.0 297.9 523.0 295.0 C523.0 292.1 522.9 288.9 522.9 287.7 Z" fill="url(#hr)"/>
<g clip-path="url(#Rc)" fill="none">
<ellipse cx="545" cy="300" rx="10" ry="22" transform="rotate(-35 545 300)" fill="url(#hg)"/>
<path d="M531.1 283.0 C533.4 283.6 540.2 284.8 544.9 286.7 C549.6 288.5 554.8 290.9 559.5 294.0 C564.1 297.0 569.6 301.4 572.9 304.8 C576.1 308.3 576.1 309.3 579.0 314.6 C581.8 319.9 586.6 330.2 589.8 336.5 C593.1 342.8 595.7 348.3 598.5 352.5 C601.4 356.7 605.5 358.1 606.8 361.7 C608.2 365.3 606.5 369.4 606.9 374.1 C607.3 378.7 608.9 384.3 609.2 389.5 C609.5 394.8 609.4 400.1 608.5 405.5 C607.7 410.9 607.0 417.2 604.2 422.0 C601.3 426.8 593.5 432.3 591.4 434.3" stroke="#c8d2de" stroke-width="0.56" opacity="0.44"/>
<path d="M531.0 283.6 C533.2 284.1 539.6 285.1 544.2 286.8 C548.8 288.6 554.1 290.8 558.6 293.9 C563.1 297.0 567.8 302.0 571.0 305.4 C574.1 308.8 574.8 308.9 577.6 314.1 C580.4 319.3 584.6 330.0 587.8 336.5 C591.0 343.0 593.8 349.2 596.7 353.4 C599.5 357.6 603.6 358.0 605.0 361.6 C606.4 365.1 604.5 369.8 604.9 374.5 C605.3 379.3 607.2 384.8 607.6 389.9 C608.0 395.0 608.2 399.8 607.3 405.1 C606.4 410.4 604.9 417.0 602.3 421.7 C599.7 426.5 593.3 431.7 591.5 433.7" stroke="#222a35" stroke-width="1.14" opacity="0.48"/>
<path d="M530.5 283.9 C532.9 284.3 540.0 284.7 544.6 286.4 C549.2 288.0 554.0 290.6 558.4 293.7 C562.7 296.8 567.5 301.5 570.6 304.9 C573.6 308.4 573.7 309.3 576.6 314.4 C579.5 319.6 584.4 329.2 587.8 335.6 C591.1 341.9 594.0 348.2 596.8 352.5 C599.6 356.9 603.4 358.2 604.7 361.7 C606.1 365.2 604.4 368.8 604.9 373.5 C605.4 378.1 607.2 384.3 607.5 389.5 C607.9 394.8 607.7 399.4 606.8 404.8 C605.9 410.2 604.8 417.2 602.2 422.2 C599.6 427.1 593.0 432.4 591.1 434.4" stroke="#95a0ae" stroke-width="0.67" opacity="0.27"/>
<path d="M530.1 283.8 C532.2 284.4 538.9 286.0 543.2 287.8 C547.4 289.6 551.3 291.8 555.6 294.8 C559.9 297.9 566.0 302.6 569.0 306.0 C572.0 309.4 570.9 310.0 573.6 315.1 C576.2 320.1 581.5 330.1 585.1 336.4 C588.7 342.7 592.0 348.6 594.9 352.9 C597.9 357.2 601.6 358.6 602.9 362.2 C604.2 365.8 602.3 369.6 602.7 374.3 C603.1 379.0 604.9 385.1 605.2 390.3 C605.6 395.4 605.6 400.1 604.8 405.4 C603.9 410.6 602.7 417.2 600.2 422.0 C597.7 426.8 591.6 432.3 589.9 434.3" stroke="#95a0ae" stroke-width="0.52" opacity="0.41"/>
<path d="M530.3 283.5 C532.3 284.2 538.2 286.1 542.5 288.0 C546.7 289.8 551.5 291.5 555.8 294.5 C560.0 297.6 565.2 302.7 568.1 306.1 C571.0 309.4 570.3 309.9 572.9 314.8 C575.6 319.7 580.7 329.3 584.1 335.7 C587.5 342.1 590.5 348.8 593.4 353.2 C596.3 357.6 600.2 358.8 601.6 362.3 C603.1 365.7 601.5 369.3 602.0 373.9 C602.4 378.6 603.8 385.1 604.1 390.3 C604.4 395.5 604.3 399.8 603.7 405.1 C603.1 410.4 602.5 417.2 600.3 421.9 C598.1 426.7 592.1 431.6 590.5 433.5" stroke="#222a35" stroke-width="0.73" opacity="0.50"/>
<path d="M529.6 284.3 C531.7 284.9 537.8 285.6 542.0 287.5 C546.2 289.3 550.5 292.3 554.7 295.4 C558.8 298.5 564.0 302.7 566.9 306.0 C569.7 309.3 568.7 310.0 571.6 315.1 C574.5 320.1 580.4 329.8 584.1 336.1 C587.8 342.5 590.9 348.8 593.7 353.1 C596.5 357.5 599.7 359.0 601.0 362.4 C602.3 365.8 600.8 368.7 601.3 373.4 C601.8 378.1 603.8 385.4 604.1 390.6 C604.3 395.8 603.6 399.3 602.8 404.5 C602.0 409.6 601.4 416.7 599.3 421.5 C597.1 426.4 591.4 431.5 589.9 433.5" stroke="#222a35" stroke-width="0.99" opacity="0.25"/>
<path d="M530.2 284.0 C532.0 284.7 537.3 286.4 541.3 288.4 C545.3 290.3 550.0 292.7 554.0 295.7 C557.9 298.6 562.2 302.9 564.9 306.1 C567.6 309.3 567.5 309.8 570.3 314.8 C573.1 319.7 578.0 329.5 581.7 335.9 C585.4 342.4 589.3 348.9 592.3 353.2 C595.3 357.6 598.3 358.7 599.6 362.2 C600.8 365.8 599.4 369.8 599.9 374.4 C600.4 379.1 602.3 385.2 602.6 390.4 C602.9 395.5 602.4 399.8 601.7 405.2 C601.0 410.5 600.5 417.7 598.6 422.5 C596.6 427.2 591.3 432.0 589.8 433.9" stroke="#c8d2de" stroke-width="0.68" opacity="0.36"/>
<path d="M529.9 283.9 C531.7 284.7 537.2 286.7 540.9 288.6 C544.6 290.5 548.2 292.4 552.0 295.4 C555.7 298.3 560.8 303.1 563.5 306.3 C566.1 309.6 565.1 309.9 567.9 314.8 C570.6 319.7 576.3 329.3 580.0 335.6 C583.8 341.9 587.6 348.1 590.4 352.5 C593.2 356.9 595.5 358.4 596.8 362.1 C598.1 365.7 597.8 369.7 598.3 374.4 C598.9 379.1 600.0 385.5 600.2 390.5 C600.5 395.5 600.4 399.4 599.8 404.6 C599.2 409.7 598.4 416.5 596.6 421.5 C594.8 426.4 590.4 432.2 589.1 434.3" stroke="#222a35" stroke-width="1.01" opacity="0.49"/>
<path d="M529.4 284.5 C531.2 285.1 536.2 286.3 539.7 288.4 C543.3 290.4 547.2 293.6 550.8 296.6 C554.4 299.7 558.7 303.5 561.4 306.5 C564.0 309.5 563.9 309.9 566.8 314.7 C569.8 319.6 575.5 329.3 579.2 335.7 C583.0 342.1 586.7 348.7 589.4 353.1 C592.0 357.5 594.2 358.8 595.3 362.3 C596.4 365.7 595.4 369.1 596.1 373.8 C596.7 378.5 598.9 385.1 599.4 390.3 C599.8 395.6 599.3 399.9 598.7 405.2 C598.1 410.5 597.4 417.2 595.7 422.0 C593.9 426.8 589.3 432.1 588.1 434.2" stroke="#95a0ae" stroke-width="0.52" opacity="0.36"/>
<path d="M529.1 284.5 C530.8 285.1 535.8 286.4 539.3 288.3 C542.8 290.2 546.5 292.9 550.2 296.0 C553.8 299.0 558.5 303.4 561.0 306.5 C563.5 309.7 562.4 309.8 565.2 314.8 C568.1 319.8 574.3 330.2 578.1 336.5 C582.0 342.8 585.4 348.2 588.2 352.5 C591.0 356.9 593.7 359.0 594.8 362.5 C595.9 366.1 594.3 369.2 594.8 373.8 C595.3 378.4 597.2 385.1 597.8 390.2 C598.3 395.3 598.4 399.3 598.1 404.5 C597.8 409.8 597.6 416.9 596.0 421.8 C594.4 426.7 589.8 431.9 588.5 433.9" stroke="#95a0ae" stroke-width="0.61" opacity="0.21"/>
<path d="M528.7 285.0 C530.4 285.6 535.7 286.6 539.2 288.6 C542.7 290.6 546.0 294.1 549.4 297.1 C552.8 300.2 557.3 303.9 559.8 306.9 C562.3 310.0 561.5 310.7 564.4 315.6 C567.3 320.4 573.5 329.7 577.3 335.9 C581.1 342.1 584.3 348.6 587.1 352.9 C589.9 357.2 593.2 358.2 594.3 361.8 C595.5 365.3 593.6 369.5 594.1 374.1 C594.6 378.8 596.7 384.4 597.2 389.6 C597.7 394.8 597.7 400.0 597.2 405.3 C596.7 410.6 595.8 416.7 594.3 421.5 C592.8 426.4 589.3 432.3 588.3 434.5" stroke="#c8d2de" stroke-width="0.94" opacity="0.28"/>
<path d="M528.9 284.2 C530.5 284.9 535.3 286.4 538.5 288.6 C541.7 290.8 544.9 294.1 548.2 297.3 C551.5 300.4 555.8 304.6 558.3 307.6 C560.8 310.7 560.1 311.0 563.1 315.7 C566.2 320.4 572.7 329.4 576.6 335.6 C580.5 341.8 583.7 348.5 586.4 352.8 C589.1 357.1 591.6 358.0 592.7 361.5 C593.9 365.0 592.8 369.0 593.4 373.8 C594.0 378.7 595.7 385.4 596.2 390.5 C596.7 395.7 596.9 399.5 596.6 404.9 C596.3 410.2 596.0 417.7 594.4 422.6 C592.8 427.5 588.4 432.3 587.2 434.3" stroke="#95a0ae" stroke-width="0.64" opacity="0.31"/>
<path d="M528.4 285.4 C530.0 286.0 534.7 287.0 537.9 289.0 C541.1 290.9 544.4 294.2 547.6 297.3 C550.8 300.3 554.9 304.3 557.2 307.3 C559.4 310.3 558.0 310.3 561.1 315.1 C564.1 320.0 571.4 329.9 575.4 336.2 C579.5 342.5 582.4 348.7 585.1 353.0 C587.8 357.3 590.3 358.4 591.5 362.0 C592.7 365.6 591.7 369.7 592.2 374.3 C592.7 379.0 594.0 384.8 594.5 389.8 C595.0 394.8 595.4 399.3 595.2 404.6 C595.1 409.9 595.0 416.6 593.7 421.5 C592.3 426.3 588.3 431.7 587.2 433.7" stroke="#222a35" stroke-width="0.80" opacity="0.26"/>
<path d="M528.5 284.7 C529.9 285.5 534.1 287.0 536.9 289.1 C539.7 291.2 542.2 294.5 545.2 297.5 C548.3 300.6 553.0 304.5 555.2 307.5 C557.4 310.5 555.5 310.6 558.4 315.4 C561.3 320.3 568.3 330.2 572.5 336.6 C576.7 342.9 581.0 349.2 583.8 353.5 C586.7 357.8 588.6 359.0 589.5 362.3 C590.4 365.7 588.7 369.1 589.1 373.6 C589.6 378.1 591.7 384.2 592.3 389.5 C592.9 394.8 592.9 399.9 592.8 405.3 C592.6 410.6 592.7 416.6 591.6 421.4 C590.5 426.3 587.2 432.3 586.4 434.4" stroke="#95a0ae" stroke-width="0.87" opacity="0.38"/>
<path d="M528.0 285.0 C529.4 285.8 533.7 287.5 536.4 289.6 C539.1 291.8 541.4 294.9 544.2 297.9 C547.0 300.9 551.2 304.5 553.3 307.4 C555.4 310.4 553.7 310.9 556.8 315.8 C559.9 320.6 567.4 330.3 571.7 336.5 C576.0 342.8 579.7 349.1 582.5 353.4 C585.2 357.7 587.3 358.7 588.2 362.1 C589.1 365.5 587.5 369.2 588.0 373.9 C588.5 378.5 590.5 384.9 591.2 390.2 C592.0 395.4 592.6 400.1 592.5 405.3 C592.4 410.6 591.7 416.8 590.5 421.6 C589.4 426.4 586.5 432.0 585.6 434.1" stroke="#222a35" stroke-width="0.87" opacity="0.25"/>
<path d="M527.4 285.4 C528.9 286.1 533.3 287.6 536.2 289.7 C539.0 291.8 541.7 295.0 544.6 298.0 C547.4 300.9 551.3 304.4 553.3 307.5 C555.3 310.6 553.7 311.6 556.8 316.4 C559.8 321.1 567.3 329.9 571.6 336.0 C575.9 342.1 579.8 348.9 582.5 353.2 C585.1 357.4 586.8 358.0 587.6 361.5 C588.4 365.0 586.7 369.3 587.3 374.0 C587.8 378.6 590.2 384.4 591.0 389.5 C591.7 394.7 592.0 399.4 591.9 404.8 C591.8 410.2 591.3 417.2 590.4 422.0 C589.5 426.9 587.1 431.8 586.5 433.8" stroke="#222a35" stroke-width="1.19" opacity="0.43"/>
<path d="M527.3 285.3 C528.7 286.2 532.9 288.2 535.5 290.4 C538.1 292.6 540.1 295.7 542.8 298.6 C545.4 301.5 549.4 304.8 551.4 307.8 C553.3 310.8 551.5 312.1 554.6 316.8 C557.6 321.5 565.1 330.1 569.5 336.0 C573.8 341.9 577.9 348.2 580.6 352.4 C583.3 356.7 584.8 357.9 585.7 361.6 C586.6 365.3 585.5 369.8 586.1 374.5 C586.7 379.2 588.3 384.7 589.1 389.8 C589.8 394.9 590.7 399.8 590.6 405.1 C590.6 410.5 589.8 416.8 588.9 421.7 C588.0 426.6 586.0 432.3 585.4 434.5" stroke="#222a35" stroke-width="1.03" opacity="0.33"/>
<path d="M526.9 285.7 C528.2 286.5 532.4 288.2 534.9 290.5 C537.5 292.8 539.5 296.4 542.1 299.4 C544.6 302.4 548.5 305.7 550.3 308.5 C552.0 311.4 549.6 311.9 552.7 316.4 C555.8 321.0 564.3 329.7 568.8 335.8 C573.3 341.9 577.2 348.5 579.8 352.8 C582.4 357.2 583.7 358.5 584.6 362.1 C585.4 365.7 584.3 369.8 584.9 374.5 C585.5 379.2 587.7 385.2 588.4 390.3 C589.1 395.3 589.3 399.4 589.3 404.7 C589.4 410.0 589.4 417.2 588.6 422.1 C587.8 427.1 585.3 432.3 584.7 434.3" stroke="#222a35" stroke-width="1.07" opacity="0.40"/>
<path d="M527.3 285.6 C528.5 286.5 532.2 288.3 534.4 290.7 C536.7 293.2 538.6 297.0 540.9 300.0 C543.1 303.0 546.0 306.2 547.8 308.9 C549.7 311.6 548.7 311.5 552.0 316.1 C555.3 320.6 563.1 330.0 567.5 336.2 C571.9 342.4 575.6 349.1 578.3 353.3 C580.9 357.6 582.5 358.1 583.3 361.6 C584.1 365.0 582.5 369.3 583.1 374.1 C583.7 379.0 586.0 385.3 586.9 390.6 C587.7 395.8 588.1 400.2 588.1 405.4 C588.1 410.6 587.3 417.1 586.9 421.9 C586.4 426.8 585.5 432.4 585.2 434.5" stroke="#95a0ae" stroke-width="0.88" opacity="0.28"/>
<path d="M527.0 285.9 C528.1 286.8 531.6 289.0 533.8 291.3 C536.1 293.6 538.3 296.7 540.5 299.7 C542.7 302.6 545.2 306.2 546.9 309.0 C548.5 311.7 546.9 311.7 550.2 316.2 C553.5 320.6 562.2 329.7 566.7 335.8 C571.2 341.8 574.9 348.0 577.3 352.5 C579.7 356.9 580.6 359.0 581.4 362.5 C582.1 366.1 580.9 369.2 581.7 373.8 C582.5 378.3 585.1 384.5 586.0 389.7 C586.8 394.9 586.8 399.7 587.0 405.1 C587.2 410.5 587.6 417.2 587.1 422.0 C586.7 426.7 584.7 431.8 584.2 433.7" stroke="#222a35" stroke-width="0.71" opacity="0.25"/>
<path d="M526.4 286.1 C527.6 286.9 531.4 288.8 533.5 291.0 C535.6 293.3 536.8 296.7 538.9 299.7 C541.0 302.6 544.5 306.0 546.1 308.9 C547.7 311.8 545.5 312.4 548.7 316.8 C551.8 321.3 560.3 329.6 565.0 335.6 C569.7 341.5 574.3 348.1 576.9 352.5 C579.5 357.0 580.1 358.7 580.8 362.3 C581.5 366.0 580.5 369.7 581.1 374.4 C581.7 379.2 583.8 385.4 584.5 390.5 C585.3 395.7 585.2 400.3 585.5 405.5 C585.7 410.6 586.2 416.6 586.0 421.4 C585.7 426.3 584.2 432.4 583.9 434.6" stroke="#95a0ae" stroke-width="0.91" opacity="0.38"/>
<path d="M526.2 285.9 C527.3 286.9 530.9 289.4 532.9 291.9 C534.9 294.4 535.9 297.9 537.9 300.8 C539.9 303.6 543.2 306.2 544.8 308.9 C546.4 311.5 544.1 312.3 547.3 316.8 C550.5 321.4 559.6 329.8 564.3 335.9 C568.9 342.1 572.8 349.2 575.4 353.5 C577.9 357.8 578.9 358.4 579.7 361.8 C580.5 365.1 579.6 369.1 580.2 373.7 C580.9 378.3 582.8 384.2 583.6 389.5 C584.3 394.8 584.4 400.2 584.7 405.6 C585.0 411.0 585.5 417.3 585.4 422.0 C585.3 426.8 584.2 432.2 584.0 434.2" stroke="#222a35" stroke-width="0.73" opacity="0.36"/>
<path d="M525.7 285.9 C526.6 286.9 529.3 289.5 531.2 291.8 C533.1 294.2 535.1 297.3 537.1 300.2 C539.1 303.1 541.6 306.4 543.1 309.3 C544.6 312.2 542.6 313.1 545.9 317.5 C549.2 321.9 558.3 329.5 563.0 335.5 C567.7 341.5 571.4 349.1 574.0 353.5 C576.5 357.8 577.6 358.4 578.4 361.7 C579.3 365.1 578.1 368.7 578.8 373.5 C579.5 378.3 582.0 385.4 582.8 390.5 C583.7 395.7 583.8 399.1 584.0 404.5 C584.3 409.8 584.4 417.5 584.3 422.4 C584.2 427.3 583.6 431.8 583.5 433.7" stroke="#222a35" stroke-width="1.07" opacity="0.27"/>
<path d="M525.9 286.6 C526.8 287.5 529.8 289.6 531.5 291.9 C533.3 294.2 534.7 297.4 536.5 300.4 C538.3 303.5 540.9 307.1 542.3 310.0 C543.6 312.8 541.3 313.3 544.5 317.7 C547.7 322.1 556.6 330.6 561.4 336.6 C566.1 342.5 570.3 349.2 573.0 353.5 C575.6 357.8 576.5 359.2 577.3 362.5 C578.0 365.9 576.7 368.9 577.3 373.5 C577.9 378.1 579.7 384.9 580.7 390.2 C581.7 395.5 582.7 399.9 583.0 405.2 C583.4 410.5 582.8 417.1 582.8 421.8 C582.8 426.5 582.8 431.6 582.8 433.6" stroke="#222a35" stroke-width="0.94" opacity="0.40"/>
<path d="M525.6 286.8 C526.4 287.8 528.8 290.2 530.5 292.5 C532.2 294.8 533.8 297.9 535.5 300.7 C537.2 303.5 539.5 306.4 540.7 309.2 C541.9 312.1 539.2 313.2 542.5 317.7 C545.8 322.1 555.7 330.2 560.6 336.1 C565.5 342.1 569.5 349.0 572.0 353.3 C574.4 357.5 574.8 358.3 575.4 361.6 C575.9 365.0 574.6 368.7 575.3 373.5 C575.9 378.4 578.0 385.3 579.1 390.5 C580.2 395.8 581.3 399.6 581.9 404.8 C582.4 410.0 582.1 416.9 582.3 421.7 C582.5 426.6 582.8 431.9 582.9 434.0" stroke="#c8d2de" stroke-width="1.15" opacity="0.56"/>
<path d="M525.4 286.1 C526.2 287.1 528.6 289.7 530.0 292.2 C531.5 294.7 532.4 298.3 534.0 301.3 C535.5 304.2 538.0 307.1 539.3 309.9 C540.5 312.6 538.3 313.3 541.6 317.7 C545.0 322.1 554.4 330.6 559.3 336.5 C564.2 342.5 568.4 349.1 571.0 353.4 C573.6 357.6 574.3 358.6 574.9 362.1 C575.5 365.6 574.0 369.8 574.6 374.3 C575.3 378.9 577.9 384.6 578.9 389.6 C579.8 394.7 579.9 399.2 580.3 404.6 C580.7 410.0 580.8 417.4 581.1 422.2 C581.4 427.1 581.9 431.8 582.0 433.7" stroke="#c8d2de" stroke-width="0.97" opacity="0.26"/>
<path d="M525.1 286.8 C525.8 287.8 528.3 290.3 529.6 292.9 C530.8 295.5 531.3 299.6 532.6 302.5 C533.8 305.4 535.8 307.7 537.0 310.2 C538.2 312.7 536.3 313.1 539.9 317.4 C543.4 321.7 553.2 330.3 558.2 336.1 C563.2 342.0 567.5 348.3 569.9 352.6 C572.4 356.8 572.6 358.1 573.1 361.7 C573.6 365.4 572.4 369.6 573.0 374.3 C573.6 378.9 575.9 384.5 576.8 389.7 C577.8 394.9 578.1 400.2 578.8 405.6 C579.4 410.9 580.2 417.2 580.7 422.0 C581.3 426.7 581.6 432.1 581.8 434.2" stroke="#222a35" stroke-width="0.70" opacity="0.27"/>
<path d="M525.0 287.3 C525.6 288.3 527.3 290.9 528.5 293.4 C529.7 295.9 531.1 299.5 532.2 302.3 C533.4 305.1 534.7 307.7 535.6 310.3 C536.5 313.0 534.3 313.9 537.7 318.1 C541.2 322.3 551.2 329.7 556.4 335.5 C561.6 341.4 566.4 348.6 568.9 353.0 C571.4 357.5 571.0 358.5 571.4 362.1 C571.8 365.6 570.7 369.5 571.3 374.1 C572.0 378.7 574.0 384.4 575.1 389.6 C576.2 394.7 577.2 399.3 577.9 404.8 C578.5 410.3 578.4 417.5 579.0 422.4 C579.7 427.3 581.2 432.3 581.6 434.3" stroke="#222a35" stroke-width="1.28" opacity="0.29"/>
<path d="M524.9 287.0 C525.4 287.9 526.6 289.9 527.6 292.5 C528.6 295.2 529.9 299.8 531.1 302.9 C532.3 305.9 534.0 308.5 534.9 311.1 C535.8 313.6 533.1 314.0 536.5 318.2 C539.9 322.4 550.2 330.4 555.4 336.1 C560.5 341.8 564.9 348.3 567.4 352.7 C569.9 357.0 569.7 358.6 570.3 362.1 C570.9 365.7 570.1 369.4 570.8 374.1 C571.6 378.8 573.7 385.1 574.7 390.2 C575.7 395.3 576.3 399.5 577.0 404.9 C577.6 410.2 578.0 417.5 578.6 422.2 C579.3 427.0 580.5 431.6 580.9 433.4" stroke="#c8d2de" stroke-width="0.98" opacity="0.38"/>
<path d="M524.4 287.3 C524.8 288.3 525.9 290.6 526.8 293.3 C527.7 295.9 528.9 300.2 529.8 303.2 C530.8 306.2 532.0 308.7 532.8 311.2 C533.5 313.7 530.6 314.0 534.2 318.2 C537.7 322.4 549.0 330.6 554.2 336.5 C559.5 342.3 563.3 349.0 565.7 353.4 C568.1 357.7 568.0 359.1 568.4 362.5 C568.9 366.0 567.5 369.5 568.3 374.2 C569.1 378.9 572.0 385.5 573.1 390.6 C574.3 395.7 574.4 399.6 575.1 404.9 C575.7 410.1 576.4 417.3 577.2 422.2 C578.0 427.1 579.5 432.4 580.0 434.4" stroke="#c8d2de" stroke-width="1.16" opacity="0.32"/>
<path d="M524.5 286.9 C524.8 288.0 525.4 290.8 526.2 293.5 C526.9 296.2 528.2 299.9 529.2 302.9 C530.2 305.8 531.4 308.9 532.1 311.4 C532.9 313.9 530.1 313.8 533.6 318.0 C537.1 322.1 547.7 330.7 553.0 336.5 C558.3 342.3 562.8 348.3 565.2 352.7 C567.6 357.0 567.0 359.1 567.4 362.5 C567.8 366.0 566.8 369.0 567.4 373.6 C568.1 378.2 570.5 385.0 571.5 390.2 C572.6 395.3 572.9 399.1 573.7 404.4 C574.6 409.7 575.7 416.9 576.7 421.7 C577.8 426.6 579.6 431.5 580.1 433.5" stroke="#222a35" stroke-width="0.89" opacity="0.45"/>
<path d="M524.0 287.5 C524.3 288.6 525.3 291.4 525.9 294.1 C526.5 296.8 527.0 301.2 527.6 304.0 C528.3 306.7 528.9 308.2 529.7 310.7 C530.4 313.1 528.7 314.5 532.2 318.8 C535.7 323.1 545.5 330.7 550.8 336.5 C556.1 342.2 561.5 349.2 564.1 353.4 C566.6 357.7 565.9 358.4 566.1 361.9 C566.3 365.3 564.7 369.6 565.4 374.3 C566.2 379.0 569.6 384.9 570.8 390.0 C572.0 395.1 571.8 399.5 572.8 404.8 C573.7 410.2 575.4 417.0 576.5 422.0 C577.6 426.9 578.9 432.5 579.4 434.6" stroke="#95a0ae" stroke-width="0.60" opacity="0.24"/>
<path d="M523.5 287.3 C523.8 288.4 524.8 291.2 525.3 293.9 C525.8 296.6 526.0 300.7 526.5 303.6 C527.0 306.5 527.7 308.8 528.3 311.4 C528.8 314.0 526.4 314.8 530.0 319.0 C533.5 323.2 544.2 330.9 549.6 336.5 C555.0 342.1 560.0 348.6 562.4 352.8 C564.8 357.0 563.5 358.3 563.9 361.8 C564.3 365.3 564.0 369.0 565.0 373.8 C565.9 378.6 568.4 385.4 569.5 390.6 C570.7 395.7 571.1 399.4 572.0 404.6 C572.9 409.8 573.7 416.7 574.9 421.6 C576.0 426.5 578.3 431.8 579.0 433.8" stroke="#c8d2de" stroke-width="0.87" opacity="0.49"/>
<path d="M523.2 287.0 C523.4 288.2 523.9 291.4 524.2 294.3 C524.6 297.1 524.7 301.2 525.2 304.2 C525.8 307.1 526.8 309.3 527.4 311.8 C528.0 314.3 525.1 314.9 528.8 319.1 C532.5 323.2 544.3 330.8 549.8 336.5 C555.3 342.3 559.4 349.2 561.7 353.5 C563.9 357.8 563.2 359.0 563.5 362.5 C563.8 365.9 562.8 369.4 563.5 374.0 C564.3 378.7 566.8 385.1 568.1 390.3 C569.3 395.5 569.8 400.2 570.9 405.5 C572.0 410.7 573.4 417.2 574.6 421.9 C575.9 426.6 577.8 431.8 578.5 433.7" stroke="#222a35" stroke-width="1.12" opacity="0.36"/>
<path d="M523.3 287.9 C523.6 289.1 524.4 292.0 524.8 294.8 C525.1 297.5 524.8 301.6 525.2 304.5 C525.6 307.4 526.8 309.6 527.3 312.0 C527.7 314.3 524.3 314.7 527.9 318.7 C531.5 322.7 543.3 330.4 548.9 336.1 C554.4 341.7 559.0 348.4 561.3 352.8 C563.6 357.1 562.4 358.3 562.7 362.0 C563.0 365.6 562.2 369.8 563.1 374.6 C564.0 379.4 566.9 385.6 568.0 390.5 C569.1 395.5 568.7 399.2 569.6 404.5 C570.6 409.8 572.0 417.5 573.5 422.4 C575.0 427.3 577.9 431.8 578.8 433.7" stroke="#c8d2de" stroke-width="0.59" opacity="0.34"/>
<path d="M523.4 287.2 C523.3 288.5 523.1 292.0 523.1 294.9 C523.1 297.9 523.0 302.2 523.4 305.1 C523.8 308.0 524.8 310.0 525.3 312.3 C525.8 314.6 522.9 315.2 526.5 319.2 C530.1 323.1 541.2 330.3 546.7 335.9 C552.2 341.5 557.3 348.5 559.8 352.9 C562.2 357.2 561.3 358.4 561.6 361.9 C561.8 365.5 560.8 369.5 561.4 374.2 C562.1 378.8 564.2 384.5 565.5 389.7 C566.8 394.9 567.9 400.0 569.0 405.3 C570.2 410.7 570.9 416.9 572.4 421.7 C573.9 426.5 577.2 431.9 578.2 434.0" stroke="#222a35" stroke-width="1.15" opacity="0.53"/>
<rect x="400" y="270" width="220" height="170" fill="url(#dk)"/>
</g>
<path d="M-10.1 0 Q-2.0 -6.3 10.1 -1.0 Q2.0 5.8 -10.1 0Z" transform="translate(441.7 408.9) rotate(100.6)" fill="url(#lf2)"/>
<path d="M-10.7 0 Q-2.1 -6.5 10.7 -1.0 Q2.1 6.0 -10.7 0Z" transform="translate(457.2 423.1) rotate(103.1)" fill="url(#lf2)"/>
<path d="M-9.2 0 Q-1.8 -6.4 9.2 -1.0 Q1.8 5.9 -9.2 0Z" transform="translate(436.9 425.1) rotate(76.6)" fill="url(#lf2)"/>
<path d="M-10.3 0 Q-2.1 -7.8 10.3 -1.2 Q2.1 7.2 -10.3 0Z" transform="translate(454.2 414.6) rotate(112.1)" fill="url(#lf3)"/>
<path d="M-9.4 0 Q-1.9 -5.7 9.4 -0.9 Q1.9 5.2 -9.4 0Z" transform="translate(455.3 404.9) rotate(58.9)" fill="url(#lf3)"/>
<path d="M-6.3 0 Q-1.3 -6.6 6.3 -1.0 Q1.3 6.1 -6.3 0Z" transform="translate(457.8 427.5) rotate(100.7)" fill="url(#lf2)"/>
<path d="M-7.8 0 Q-1.6 -7.8 7.8 -1.2 Q1.6 7.2 -7.8 0Z" transform="translate(439.5 392.6) rotate(93.9)" fill="url(#lf2)"/>
<path d="M-6.2 0 Q-1.2 -8.6 6.2 -1.3 Q1.2 7.9 -6.2 0Z" transform="translate(427.0 381.7) rotate(107.3)" fill="url(#lf1)"/>
<path d="M-10.0 0 Q-2.0 -5.2 10.0 -0.8 Q2.0 4.8 -10.0 0Z" transform="translate(422.4 380.8) rotate(83.7)" fill="url(#lf3)"/>
<path d="M-9.3 0 Q-1.9 -7.0 9.3 -1.1 Q1.9 6.4 -9.3 0Z" transform="translate(427.7 386.0) rotate(88.1)" fill="url(#lf3)"/>
<path d="M-10.3 0 Q-2.1 -7.1 10.3 -1.1 Q2.1 6.5 -10.3 0Z" transform="translate(442.4 399.6) rotate(55.7)" fill="url(#lf2)"/>
<path d="M-6.6 0 Q-1.3 -8.6 6.6 -1.3 Q1.3 7.9 -6.6 0Z" transform="translate(434.4 416.6) rotate(56.0)" fill="url(#lf2)"/>
<path d="M-10.2 0 Q-2.0 -8.6 10.2 -1.3 Q2.0 7.9 -10.2 0Z" transform="translate(447.5 421.4) rotate(118.7)" fill="url(#lf2)"/>
<path d="M-9.0 0 Q-1.8 -8.0 9.0 -1.2 Q1.8 7.4 -9.0 0Z" transform="translate(421.3 380.5) rotate(87.4)" fill="url(#lf2)"/>
<path d="M-8.4 0 Q-1.7 -7.6 8.4 -1.2 Q1.7 7.0 -8.4 0Z" transform="translate(456.0 397.1) rotate(108.0)" fill="url(#lf2)"/>
<path d="M-10.0 0 Q-2.0 -6.5 10.0 -1.0 Q2.0 6.0 -10.0 0Z" transform="translate(420.8 396.6) rotate(62.4)" fill="url(#lf2)"/>
<path d="M-10.8 0 Q-2.2 -8.7 10.8 -1.3 Q2.2 8.1 -10.8 0Z" transform="translate(600.8 392.6) rotate(67.1)" fill="url(#lf3)"/>
<path d="M-10.0 0 Q-2.0 -8.8 10.0 -1.4 Q2.0 8.1 -10.0 0Z" transform="translate(597.6 398.6) rotate(115.8)" fill="url(#lf1)"/>
<path d="M-9.6 0 Q-1.9 -6.1 9.6 -0.9 Q1.9 5.6 -9.6 0Z" transform="translate(598.3 408.5) rotate(61.5)" fill="url(#lf3)"/>
<path d="M-6.6 0 Q-1.3 -8.6 6.6 -1.3 Q1.3 7.9 -6.6 0Z" transform="translate(598.2 380.1) rotate(68.9)" fill="url(#lf1)"/>
<path d="M-6.1 0 Q-1.2 -6.9 6.1 -1.1 Q1.2 6.4 -6.1 0Z" transform="translate(568.5 411.4) rotate(92.0)" fill="url(#lf3)"/>
<path d="M-8.1 0 Q-1.6 -8.8 8.1 -1.3 Q1.6 8.1 -8.1 0Z" transform="translate(566.3 424.8) rotate(112.0)" fill="url(#lf2)"/>
<path d="M-8.9 0 Q-1.8 -6.0 8.9 -0.9 Q1.8 5.6 -8.9 0Z" transform="translate(583.4 416.6) rotate(94.0)" fill="url(#lf1)"/>
<path d="M-10.5 0 Q-2.1 -7.1 10.5 -1.1 Q2.1 6.6 -10.5 0Z" transform="translate(578.7 380.6) rotate(76.7)" fill="url(#lf1)"/>
<path d="M-6.1 0 Q-1.2 -5.2 6.1 -0.8 Q1.2 4.8 -6.1 0Z" transform="translate(594.7 419.5) rotate(115.4)" fill="url(#lf3)"/>
<path d="M-7.7 0 Q-1.5 -6.5 7.7 -1.0 Q1.5 6.0 -7.7 0Z" transform="translate(578.4 382.7) rotate(89.7)" fill="url(#lf2)"/>
<path d="M-8.6 0 Q-1.7 -8.5 8.6 -1.3 Q1.7 7.8 -8.6 0Z" transform="translate(576.3 421.1) rotate(73.1)" fill="url(#lf2)"/>
<path d="M-10.0 0 Q-2.0 -7.3 10.0 -1.1 Q2.0 6.8 -10.0 0Z" transform="translate(581.8 382.8) rotate(87.2)" fill="url(#lf2)"/>
<path d="M-6.7 0 Q-1.3 -5.9 6.7 -0.9 Q1.3 5.5 -6.7 0Z" transform="translate(566.3 377.2) rotate(106.5)" fill="url(#lf2)"/>
<path d="M-6.0 0 Q-1.2 -7.0 6.0 -1.1 Q1.2 6.4 -6.0 0Z" transform="translate(577.6 419.4) rotate(81.8)" fill="url(#lf3)"/>
<path d="M-9.8 0 Q-2.0 -6.3 9.8 -1.0 Q2.0 5.8 -9.8 0Z" transform="translate(602.4 390.0) rotate(82.6)" fill="url(#lf1)"/>
<path d="M-10.9 0 Q-2.2 -7.7 10.9 -1.2 Q2.2 7.1 -10.9 0Z" transform="translate(579.1 382.1) rotate(122.0)" fill="url(#lf3)"/>
<path d="M456 386 C480 381 540 381 568 384 L566 411 C540 414 480 414 458 412 Z" fill="#353c48"/>
<path d="M-10.8 0 Q-2.2 -15.2 10.8 -2.3 Q2.2 14.1 -10.8 0Z" transform="translate(458.8 389.9) rotate(-1.0)" fill="url(#lf1)"/>
<path d="M-14.9 0 Q-3.0 -16.7 14.9 -2.6 Q3.0 15.4 -14.9 0Z" transform="translate(476.5 388.9) rotate(-15.8)" fill="url(#lf3)"/>
<path d="M-11.2 0 Q-2.2 -14.0 11.2 -2.2 Q2.2 13.0 -11.2 0Z" transform="translate(491.4 386.5) rotate(4.3)" fill="url(#lf1)"/>
<path d="M-10.7 0 Q-2.1 -16.5 10.7 -2.5 Q2.1 15.3 -10.7 0Z" transform="translate(504.9 390.3) rotate(9.7)" fill="url(#lf2)"/>
<path d="M-15.0 0 Q-3.0 -16.3 15.0 -2.5 Q3.0 15.1 -15.0 0Z" transform="translate(522.6 390.2) rotate(5.8)" fill="url(#lf1)"/>
<path d="M-14.8 0 Q-3.0 -15.5 14.8 -2.4 Q3.0 14.3 -14.8 0Z" transform="translate(541.1 389.2) rotate(7.4)" fill="url(#lf2)"/>
<path d="M-10.1 0 Q-2.0 -12.8 10.1 -2.0 Q2.0 11.8 -10.1 0Z" transform="translate(554.9 390.2) rotate(15.4)" fill="url(#lf1)"/>
<path d="M-12.3 0 Q-2.5 -13.9 12.3 -2.1 Q2.5 12.8 -12.3 0Z" transform="translate(569.7 389.3) rotate(-0.8)" fill="url(#lf1)"/>
<path d="M-13.3 0 Q-2.7 -13.5 13.3 -2.1 Q2.7 12.4 -13.3 0Z" transform="translate(461.3 405.8) rotate(-21.3)" fill="url(#lf1)"/>
<path d="M-11.0 0 Q-2.2 -13.8 11.0 -2.1 Q2.2 12.8 -11.0 0Z" transform="translate(475.7 408.3) rotate(12.7)" fill="url(#lf3)"/>
<path d="M-14.9 0 Q-3.0 -12.3 14.9 -1.9 Q3.0 11.4 -14.9 0Z" transform="translate(493.4 403.9) rotate(2.9)" fill="url(#lf2)"/>
<path d="M-11.0 0 Q-2.2 -13.8 11.0 -2.1 Q2.2 12.7 -11.0 0Z" transform="translate(508.1 408.1) rotate(-4.5)" fill="url(#lf2)"/>
<path d="M-14.8 0 Q-3.0 -11.2 14.8 -1.7 Q3.0 10.3 -14.8 0Z" transform="translate(525.7 406.0) rotate(-0.8)" fill="url(#lf2)"/>
<path d="M-10.1 0 Q-2.0 -13.0 10.1 -2.0 Q2.0 12.0 -10.1 0Z" transform="translate(539.5 404.0) rotate(24.6)" fill="url(#lf2)"/>
<path d="M-10.0 0 Q-2.0 -12.5 10.0 -1.9 Q2.0 11.5 -10.0 0Z" transform="translate(552.0 403.9) rotate(1.1)" fill="url(#lf3)"/>
<path d="M-13.0 0 Q-2.6 -12.6 13.0 -1.9 Q2.6 11.6 -13.0 0Z" transform="translate(567.6 406.3) rotate(-16.0)" fill="url(#lf1)"/>
<path d="M-13.1 0 Q-2.6 -11.3 13.1 -1.7 Q2.6 10.4 -13.1 0Z" transform="translate(584.0 407.7) rotate(13.1)" fill="url(#lf2)"/>
<path d="M496 382 L500 371 L503 382Z M504 380 L509 371 L511 381Z M512 381 L517 372 L519 382Z M488 384 L491 376 L494 384Z M522 383 L526 375 L528 383Z" fill="#7e8a98"/>
<path d="M478 410 L481 422 L484 410Z M500 412 L502 424 L505 412Z M524 412 L526 423 L529 412Z M540 410 L543 420 L546 410Z" fill="#3a414b"/>
</svg>
<!-- unity bars -->
<div class="a" style="left:278px;top:133px;width:63px;height:11px;background:#2e2e2e;border-radius:3px 3px 0 0"></div>
<div class="t" style="left:219px;top:134px;font-size:10px;line-height:10px;color:#b0b0b0">#</div>
<div class="t" style="left:229px;top:135px;font-size:8px;line-height:10px;color:#5c5c5c;letter-spacing:.3px">Scene</div>
<div class="a" style="left:284px;top:136px;width:6px;height:6px;background:#a0a0a0;border-radius:1px"></div>
<div class="t" style="left:292px;top:135px;font-size:8px;line-height:10px;color:#6a6a6a;letter-spacing:.3px">Game</div>
<div class="a" style="left:348px;top:137px;width:5px;height:5px;background:#b04858;border-radius:50%"></div>
<div class="t" style="left:355px;top:135px;font-size:8px;line-height:10px;color:#707070;letter-spacing:.3px">Profiler</div>
<div class="a" style="left:272px;top:144px;width:1px;height:9px;background:#111"></div>
<div class="t" style="left:222px;top:144px;font-size:7.5px;line-height:10px;color:#7a7a7a;letter-spacing:.3px">Display 1</div>
<div class="t" style="left:263px;top:144px;font-size:7.5px;line-height:10px;color:#909090">=</div>
<div class="t" style="left:276px;top:144px;font-size:7.5px;line-height:10px;color:#7a7a7a;letter-spacing:.3px">Free Aspect</div>
<div class="a" style="left:370px;top:148px;width:0;height:0;border-left:2px solid transparent;border-right:2px solid transparent;border-top:3px solid #888"></div>


<!-- ===== Right panel ===== -->
<div class="a" style="left:642px;top:107px;width:198px;height:18px;background:linear-gradient(#dce7f0,#c5d6e5)"></div>
<div class="t" style="left:647px;top:110px;color:#14163a">Inputs</div>
<div class="a" style="left:642px;top:125px;width:200px;height:390px;border:1px solid #a0a0a0;border-top-color:#787878;background:#f0f0f0"></div>
<div class="a" style="left:652px;top:135px;width:178px;height:135px;background:#000"></div>
<div class="a" style="left:656px;top:241px;width:170px;height:26px;background:#c5d3e2"></div>
<div class="a" style="left:652px;top:277px;width:178px;height:136px;background:#000"></div>
<div class="a" style="left:664px;top:281px;width:153px;height:102px;background:#fff"></div>
<div class="a" style="left:656px;top:383px;width:170px;height:26px;background:#c5d3e2"></div>
<div class="a" style="left:652px;top:419px;width:178px;height:93px;background:#000"></div>
<div class="a" style="left:690px;top:423px;width:102px;height:89px;background:#fff"></div>
<div class="a" style="left:832px;top:146px;width:8px;height:172px;background:#cdcdcd"></div>
<svg class="a" style="left:689px;top:140px" width="104" height="101">
<defs>
<filter id="nz1" x="0" y="0" width="100%" height="100%"><feTurbulence type="fractalNoise" baseFrequency="0.8 0.12" numOctaves="3" seed="7"/><feColorMatrix type="matrix" values="0 0 0 0 .3 0 0 0 0 .33 0 0 0 0 .38 3.5 0 0 0 -2.05"/></filter>
<filter id="nz2" x="0" y="0" width="100%" height="100%"><feTurbulence type="fractalNoise" baseFrequency="0.9 0.3" numOctaves="3" seed="11"/><feColorMatrix type="matrix" values="0 0 0 0 .4 0 0 0 0 .44 0 0 0 0 .5 3 0 0 0 -1.6"/></filter>
<linearGradient id="ng" x1="0" y1="0" x2="0" y2="1"><stop offset="0" stop-color="#020304"/><stop offset=".4" stop-color="#05070a"/><stop offset=".62" stop-color="#14181c"/><stop offset="1" stop-color="#181c21"/></linearGradient>
<linearGradient id="mg" x1="0" y1="0" x2="0" y2="1"><stop offset="0" stop-color="#fff" stop-opacity="0"/><stop offset=".38" stop-color="#fff" stop-opacity=".05"/><stop offset=".6" stop-color="#fff" stop-opacity="1"/><stop offset="1" stop-color="#fff" stop-opacity="1"/></linearGradient>
<mask id="nm"><rect width="104" height="101" fill="url(#mg)"/></mask>
</defs>
<rect width="104" height="101" fill="url(#ng)"/>
<rect width="104" height="101" filter="url(#nz1)"/>
<rect width="104" height="101" filter="url(#nz2)" mask="url(#nm)"/>
</svg>

<div class="t" style="left:660px;top:246px;font-size:16.6px;line-height:18px;font-weight:bold;color:#111;letter-spacing:0.5px">PS 0</div>
<div class="t" style="left:737px;top:243px;font-size:11.5px;line-height:13px;color:#111">texture0 =</div>
<div class="t" style="left:724px;top:255px;font-size:11px;line-height:13px;color:#111">Fatty_wig_color</div>
<svg class="a" style="left:664px;top:281px" width="153" height="102">
<defs><filter id="bf" x="-50%" y="-50%" width="200%" height="200%"><feGaussianBlur stdDeviation="2.6"/></filter>
<filter id="bf3" x="-50%" y="-50%" width="200%" height="200%"><feGaussianBlur stdDeviation="4"/></filter>
<filter id="bf2" x="-50%" y="-50%" width="200%" height="200%"><feGaussianBlur stdDeviation="0.7"/></filter></defs>
<ellipse cx="83" cy="15" rx="10" ry="8" fill="#000" opacity=".6" filter="url(#bf3)"/>
<path d="M44 20 C46 15 52 11 58 9 C62 5 70 3 76 6 C80 9 79 15 73 21 L66 24 L48 24 Z" fill="#000" filter="url(#bf)"/>
<path d="M50 23 L66 23 L70 14 L64 12 Z" fill="#000" filter="url(#bf2)"/>
<path d="M64 26 Q70 14 76 15 Q84 17 89 28 L90 46 L64 46 Z" fill="#fff" filter="url(#bf2)"/>
<rect x="59.5" y="30" width="2" height="14" fill="#222" filter="url(#bf2)"/>
<rect x="55" y="33" width="1.5" height="7" fill="#999" filter="url(#bf2)"/>
<rect x="90" y="31" width="3" height="6" fill="#aaa" filter="url(#bf2)"/>
</svg>
<div class="t" style="left:660px;top:388px;font-size:16.6px;line-height:18px;font-weight:bold;color:#111;letter-spacing:0.5px">PS 1</div>
<div class="t" style="left:708px;top:383px;font-size:11.3px;line-height:13px;color:#111">texture1 = TempBuffer</div>
<div class="t" style="left:730px;top:397px;font-size:11px;line-height:13px;color:#111">1822 933x622</div>
<svg class="a" style="left:831px;top:134px" width="10" height="9"><path d="M2 7 L6 3 L10 7" fill="none" stroke="#555" stroke-width="1.8"/></svg>
<svg class="a" style="left:832px;top:499px" width="10" height="9"><path d="M3 2.5 L7 6.5 L11 2.5" fill="none" stroke="#555" stroke-width="1.8"/></svg>
<div class="a" style="left:837px;top:112px;width:2px;height:7px;background:#000"></div><div class="a" style="left:837px;top:117px;width:3px;height:2px;background:#000"></div>
<!-- bottom tabs -->
<div class="a" style="left:642px;top:515px;width:198px;height:21px;background:#e9e9e9"></div><div class="a" style="left:642px;top:514px;width:198px;height:1.5px;background:#6a6a6a"></div>
<div class="a" style="left:643px;top:515px;width:66px;height:21px;background:#ececec"></div>
<div class="a" style="left:644px;top:518px;width:16px;height:15px;background:#1fb473"></div>
<svg class="a" style="left:644px;top:517px" width="16" height="16"><circle cx="8" cy="6.8" r="2.8" fill="none" stroke="#e8fff2" stroke-width="1.4"/><path d="M2.6 11.6 Q8 7.2 13.4 11.6" fill="none" stroke="#e8fff2" stroke-width="1.3"/></svg>
<div class="t" style="left:662px;top:519px;font-size:11.5px;color:#7a7a7a">Outputs</div>
<div class="a" style="left:709px;top:514px;width:60px;height:22px;border:1px solid #a8a8a8;border-top:none;background:#f5f5f5"></div>
<div class="a" style="left:711px;top:518px;width:16px;height:15px;background:#1fb473"></div>
<svg class="a" style="left:711px;top:517px" width="16" height="16"><circle cx="8" cy="6.8" r="2.8" fill="none" stroke="#e8fff2" stroke-width="1.4"/><path d="M2.6 11.6 Q8 7.2 13.4 11.6" fill="none" stroke="#e8fff2" stroke-width="1.3"/></svg>
<div class="t" style="left:730px;top:519px;font-size:11.5px;color:#111">Inputs</div>



<!-- tooltip -->
<div class="a" style="left:54px;top:66px;width:126px;height:20px;background:rgba(0,0,0,.2);filter:blur(1.5px)"></div>
<div class="a" style="left:52px;top:64px;width:126px;height:20px;border:1px solid #767676;background:#fff"></div>
<div class="t" style="left:58px;top:67px;font-size:11.3px;color:#575757">Save Selected Texture</div>

</body></html>
